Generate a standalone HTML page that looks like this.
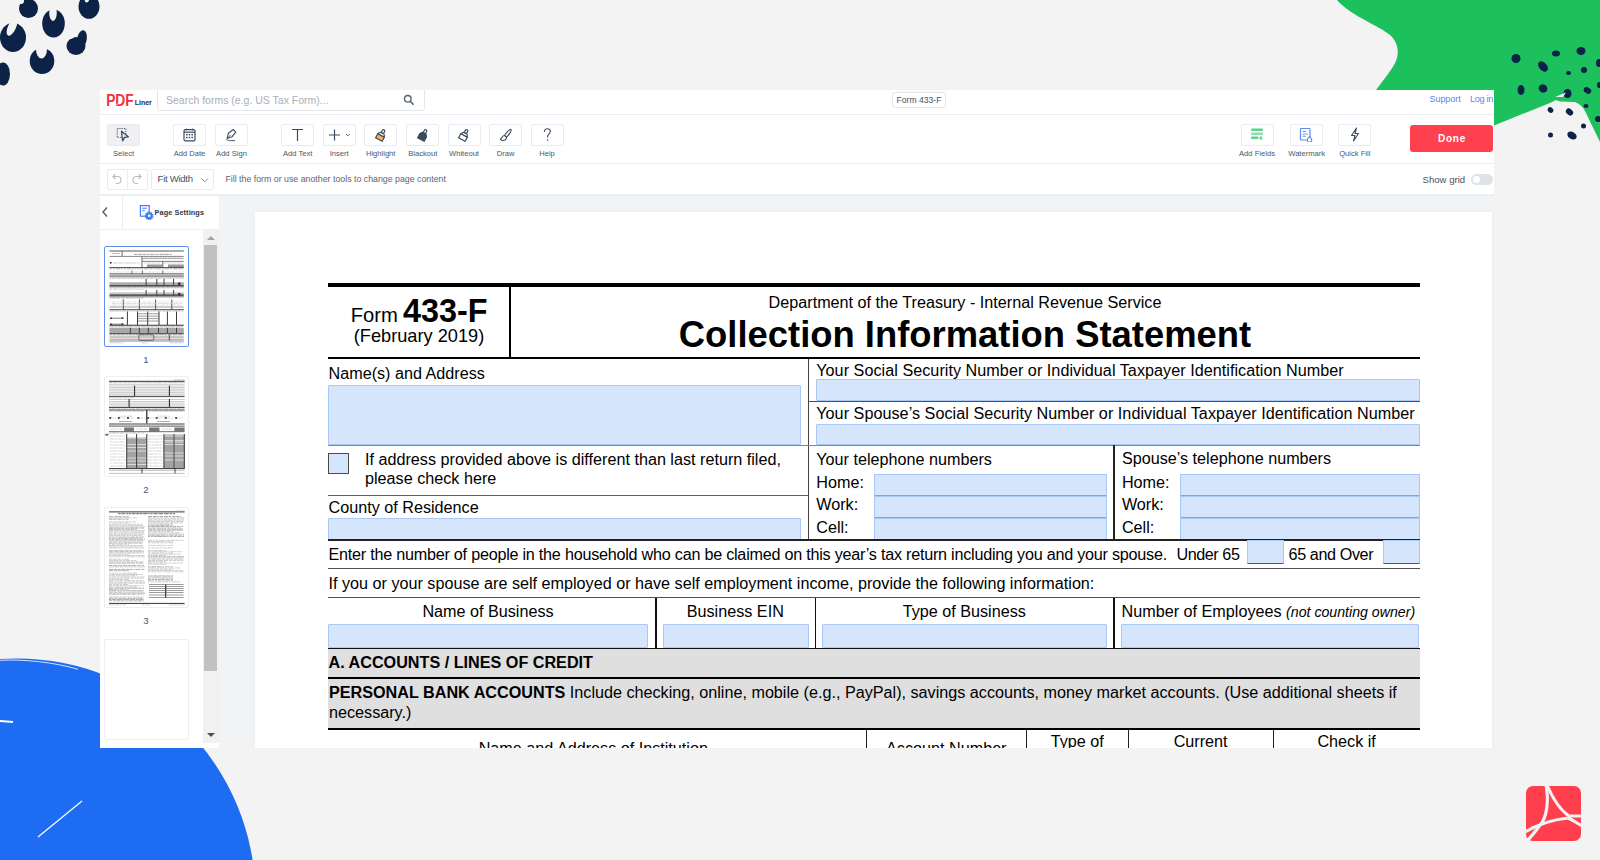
<!DOCTYPE html>
<html><head><meta charset="utf-8"><title>PDFLiner - Form 433-F</title>
<style>
*{box-sizing:border-box}
html,body{margin:0;padding:0}
body{width:1600px;height:860px;position:relative;overflow:hidden;background:#f3f3f3;font-family:"Liberation Sans",sans-serif}
.t{position:absolute;white-space:nowrap;line-height:1}
.r{position:absolute}
.f{position:absolute;background:#d5e6fc;border:1px solid #a9c8f8;border-radius:1px}
.btn{position:absolute;top:33.5px;width:33px;height:22px;border:1px solid #e8ebf1;border-radius:2px;background:#fff}
.lbl{position:absolute;top:60px;font-size:7.6px;color:#4f5666;white-space:nowrap;line-height:1;text-align:center;width:60px}
.thumb{position:absolute;left:3.5px;width:85.5px;height:101px;background:#fff;border:1px solid #eeeff2;border-radius:2px}
.pn{position:absolute;width:92px;left:0;text-align:center;font-size:9.6px;color:#4b5466;line-height:1}
</style></head><body>

<svg style="position:absolute;left:0;top:0" width="1600" height="860" viewBox="0 0 1600 860">
<g fill="#0c2246">
<ellipse cx="28.5" cy="8.5" rx="9.5" ry="9.5"/>
<ellipse cx="53.5" cy="23.5" rx="11.3" ry="14"/>
<ellipse cx="13" cy="37.5" rx="13" ry="14.5"/>
<ellipse cx="89" cy="6.5" rx="10.5" ry="12.3"/>
<ellipse cx="76" cy="46" rx="9.5" ry="9"/><ellipse cx="82" cy="39" rx="4.8" ry="8.8" transform="rotate(10 82 39)"/>
<ellipse cx="42" cy="61" rx="12.3" ry="13"/>
<ellipse cx="3" cy="74" rx="7" ry="11.5"/>
</g>
<g fill="#f3f3f3">
<ellipse cx="21" cy="1" rx="3" ry="3"/>
<ellipse cx="53" cy="12.5" rx="3.8" ry="8.5"/>
<ellipse cx="12" cy="27" rx="4" ry="9.5" transform="rotate(25 12 27)"/>
<ellipse cx="87" cy="0" rx="2" ry="2.5" transform="rotate(30 87 0)"/>
<ellipse cx="71" cy="34" rx="4.5" ry="5" transform="rotate(35 71 34)"/>
<ellipse cx="41.5" cy="49" rx="5.5" ry="9.5"/>
</g>
<path fill="#1cc15e" d="M1337,0 C1341,5 1350,12 1363,19 C1375,26 1384,30 1390,35 C1397,41 1399,50 1397,58 C1395,66 1385,78 1376,90 L1365,120 L1494,140 L1494,125.5 L1551,102.5 L1556,100 L1560,101.5 L1575,102 C1580,104 1583,107 1585,111 L1600,142 L1600,0 Z"/>
<g fill="#0c2246">
<ellipse cx="1516" cy="58.5" rx="4.5" ry="4.5"/>
<ellipse cx="1556" cy="53.5" rx="4" ry="3"/>
<ellipse cx="1581" cy="51" rx="4.5" ry="4"/>
<ellipse cx="1599" cy="63" rx="3" ry="4"/>
<ellipse cx="1543" cy="66.5" rx="6" ry="4" transform="rotate(50 1543 66.5)"/>
<ellipse cx="1584" cy="70" rx="3" ry="3"/>
<ellipse cx="1568.5" cy="73" rx="2.5" ry="2"/>
<ellipse cx="1521" cy="90" rx="3.5" ry="5"/>
<ellipse cx="1543" cy="88.5" rx="4.5" ry="4" transform="rotate(30 1543 88.5)"/>
<ellipse cx="1567.5" cy="93.5" rx="4" ry="4.5"/>
<ellipse cx="1587.5" cy="90.5" rx="4" ry="3" transform="rotate(30 1587.5 90.5)"/>
<ellipse cx="1599" cy="85" rx="2" ry="3"/>
<ellipse cx="1586" cy="106" rx="2.5" ry="2"/>
<ellipse cx="1550.5" cy="110" rx="3" ry="2.5" transform="rotate(40 1550.5 110)"/>
<ellipse cx="1569.5" cy="112" rx="4" ry="3" transform="rotate(40 1569.5 112)"/>
<ellipse cx="1598" cy="119" rx="3" ry="3"/>
<ellipse cx="1583.5" cy="126" rx="2.5" ry="2.5"/>
<ellipse cx="1550.5" cy="135" rx="2.5" ry="2.5"/>
<ellipse cx="1572" cy="135.5" rx="5" ry="3.5" transform="rotate(30 1572 135.5)"/>
</g>
<path d="M1555,97 L1566,92.5 L1563,97 Z" fill="#f3f3f3"/>
<circle cx="17" cy="897" r="238.5" fill="#1e6cf1"/>
<path d="M0,660.3 C25,659 55,662.5 78,669.3" stroke="#fff" stroke-width="0.8" fill="none"/>
<path d="M0,721 L13,722" stroke="#fff" stroke-width="2" fill="none"/>
<path d="M38,837 L82,801" stroke="#fff" stroke-width="1.2" fill="none"/>
<g>
<rect x="1526" y="786" width="55" height="55" rx="7" fill="#ff3f4e"/>
<path d="M1546,785 C1549,800 1547,818 1540,825 C1535,832 1530,838 1526,842" stroke="#f3f3f3" stroke-width="3.2" fill="none"/>
<path d="M1547,785 C1553,799 1560,810 1569,816 L1582,816" stroke="#f3f3f3" stroke-width="3" fill="none"/>
<path d="M1525,832 C1535,826 1550,820 1568,818 C1573,820 1578,824 1582,826" stroke="#f3f3f3" stroke-width="3" fill="none"/>
</g>
</svg>

<div style="position:absolute;left:100px;top:90px;width:1394px;height:658px;background:#fff;overflow:hidden">
<div class="r" style="left:0;top:24px;width:1394px;height:1px;background:#e9ecf1"></div>
<svg style="position:absolute;left:5px;top:3px" width="50" height="16" viewBox="0 0 50 16">
<text x="1.2" y="12.9" font-family="Liberation Sans" font-weight="bold" font-size="15.6" fill="#f2303f" textLength="27.5" lengthAdjust="spacingAndGlyphs">PDF</text><path d="M11.5,12.3 C14,9.8 16,7.3 17,3.8" stroke="#fff" stroke-width="0.9" fill="none"/>
<text x="29.7" y="11.6" font-family="Liberation Sans" font-weight="bold" font-size="7" fill="#1d2a44">Liner</text>
</svg>
<div class="r" style="left:57.4px;top:-1px;width:268px;height:21.5px;border:1px solid #e4e7ee;border-radius:0 0 3px 3px;background:#fff"></div>
<div class="t" style="left:66px;top:5px;font-size:10.5px;color:#a9aeb8">Search forms (e.g. US Tax Form)...</div>
<svg style="position:absolute;left:303px;top:4px" width="12" height="12" viewBox="0 0 12 12"><circle cx="4.8" cy="4.8" r="3.3" stroke="#5a6475" stroke-width="1.4" fill="none"/><path d="M7.3,7.3 L10.2,10.2" stroke="#5a6475" stroke-width="1.6" stroke-linecap="round"/></svg>
<div class="r" style="left:791.5px;top:2.25px;width:54px;height:15.25px;border:1px solid #e4e7ee;border-radius:3px"></div>
<div class="t" style="left:796.5px;top:5.6px;font-size:8.6px;color:#4b5261">Form 433-F</div>
<div class="t" style="left:1329.5px;top:4.7px;font-size:9px;color:#4f88ee;letter-spacing:-0.05px">Support</div>
<div class="t" style="left:1370px;top:4.6px;font-size:9.2px;color:#4f88ee;letter-spacing:-0.35px">Log in</div>
<div class="r" style="left:0;top:73.2px;width:1394px;height:1.2px;background:#eceef2"></div>
<div class="btn" style="left:7px;background:#eef0f3;border-color:#e8eaee;"></div>
<div class="lbl" style="left:-6.5px">Select</div>
<div class="btn" style="left:73px;"></div>
<div class="lbl" style="left:59.5px">Add Date</div>
<div class="btn" style="left:115px;"></div>
<div class="lbl" style="left:101.5px">Add Sign</div>
<div class="btn" style="left:181.2px;"></div>
<div class="lbl" style="left:167.7px">Add Text</div>
<div class="btn" style="left:222.7px;"></div>
<div class="lbl" style="left:209.2px">Insert</div>
<div class="btn" style="left:264.2px;"></div>
<div class="lbl" style="left:250.7px">Highlight</div>
<div class="btn" style="left:306.3px;"></div>
<div class="lbl" style="left:292.8px">Blackout</div>
<div class="btn" style="left:347.5px;"></div>
<div class="lbl" style="left:334.0px">Whiteout</div>
<div class="btn" style="left:389.2px;"></div>
<div class="lbl" style="left:375.7px">Draw</div>
<div class="btn" style="left:430.5px;"></div>
<div class="lbl" style="left:417.0px">Help</div>
<div class="btn" style="left:1140.5px;"></div>
<div class="lbl" style="left:1127.0px">Add Fields</div>
<div class="btn" style="left:1190.2px;"></div>
<div class="lbl" style="left:1176.7px">Watermark</div>
<div class="btn" style="left:1238.3px;"></div>
<div class="lbl" style="left:1224.8px">Quick Fill</div>
<svg style="position:absolute;left:16px;top:37px" width="14" height="15" viewBox="0 0 14 15"><rect x="1.2" y="1.5" width="8.6" height="8.9" fill="none" stroke="#3d4b60" stroke-width="0.9" stroke-dasharray="1.2 1"/><path d="M5.5,4.2 L12.3,9.8 L8.6,10.4 L6.6,13.8 Z" fill="#eef0f3" stroke="#3d4b60" stroke-width="1.3" stroke-linejoin="round"/></svg>
<svg style="position:absolute;left:83px;top:38px" width="13" height="14" viewBox="0 0 13 14"><rect x="1" y="1.6" width="11" height="11.2" rx="1.3" fill="none" stroke="#3d4b60" stroke-width="1.2"/><path d="M1,4.2 H12" stroke="#3d4b60" stroke-width="1.2"/><path d="M3.5,0.6 V2.4 M9.5,0.6 V2.4" stroke="#3d4b60" stroke-width="1"/><g fill="#3d4b60"><rect x="3" y="6" width="1.6" height="1.4"/><rect x="5.7" y="6" width="1.6" height="1.4"/><rect x="8.4" y="6" width="1.6" height="1.4"/><rect x="3" y="8.8" width="1.6" height="1.4"/><rect x="5.7" y="8.8" width="1.6" height="1.4"/><rect x="8.4" y="8.8" width="1.6" height="1.4"/></g></svg>
<svg style="position:absolute;left:125px;top:38px" width="12" height="14" viewBox="0 0 12 14"><path d="M2.2,10.5 L3.2,5.5 L8.2,1.5 L10.8,4.1 L7,8.8 Z" fill="none" stroke="#3d4b60" stroke-width="1.1" stroke-linejoin="round"/><path d="M2.2,10.5 L5.6,6.8" stroke="#3d4b60" stroke-width="0.9"/><path d="M1.5,11.5 C3,12.8 5,12.6 10,12.6" stroke="#3d4b60" stroke-width="1" fill="none"/></svg>
<svg style="position:absolute;left:190px;top:37px" width="16" height="16" viewBox="0 0 16 16"><path d="M2,2.5 H13 M7.5,2.5 V14" stroke="#3d4b60" stroke-width="1.2" fill="none"/></svg>
<svg style="position:absolute;left:228px;top:38px" width="24" height="14" viewBox="0 0 24 14"><path d="M6.5,1.5 V12.5 M1,7 H12" stroke="#3d4b60" stroke-width="1.2"/><path d="M18,6 L19.8,7.8 L21.6,6" stroke="#3d4b60" stroke-width="0.9" fill="none"/></svg>
<svg style="position:absolute;left:274px;top:38px" width="14" height="14" viewBox="0 0 14 14"><g transform="translate(7.3 7) rotate(28) scale(0.92) translate(-7 -7)"><rect x="5.6" y="0.6" width="2.8" height="4.2" rx="1.4" fill="none" stroke="#3d4b60" stroke-width="1.3"/><path d="M4.6,4.8 H9.4 L11,7.6 H3 Z" fill="#fff" stroke="#3d4b60" stroke-width="1.2" stroke-linejoin="round"/><path d="M3,7.6 H11 V12.6 H3 Z" fill="#f3b84d" stroke="#3d4b60" stroke-width="1.3"/></g></svg>
<svg style="position:absolute;left:316px;top:38px" width="14" height="14" viewBox="0 0 14 14"><g transform="translate(7.3 7) rotate(28) scale(0.92) translate(-7 -7)"><rect x="5.6" y="0.6" width="2.8" height="4.2" rx="1.4" fill="none" stroke="#3d4b60" stroke-width="1.3"/><path d="M4.6,4.8 H9.4 L11,7.6 H3 Z" fill="#3d4b60" stroke="#3d4b60" stroke-width="1.2" stroke-linejoin="round"/><path d="M3,7.6 H11 V12.6 H3 Z" fill="#3d4b60" stroke="#3d4b60" stroke-width="1.3"/></g></svg>
<svg style="position:absolute;left:357px;top:38px" width="14" height="14" viewBox="0 0 14 14"><g transform="translate(7.3 7) rotate(28) scale(0.92) translate(-7 -7)"><rect x="5.6" y="0.6" width="2.8" height="4.2" rx="1.4" fill="none" stroke="#3d4b60" stroke-width="1.3"/><path d="M4.6,4.8 H9.4 L11,7.6 H3 Z" fill="#fff" stroke="#3d4b60" stroke-width="1.2" stroke-linejoin="round"/><path d="M3,7.6 H11 V12.6 H3 Z" fill="#fff" stroke="#3d4b60" stroke-width="1.3"/></g></svg>
<svg style="position:absolute;left:399px;top:38px" width="14" height="14" viewBox="0 0 14 14"><path d="M12,1.5 C13,2.5 10,7 7.5,9 L5.5,7.5 C7,5 11,0.5 12,1.5 Z" fill="none" stroke="#3d4b60" stroke-width="1.1"/><path d="M5.5,7.5 C3,7.5 3.5,10 2,10.5 C1,11 1.5,12.5 4,12.5 C6.5,12.5 7.5,10.5 7.5,9" fill="none" stroke="#3d4b60" stroke-width="1.1"/></svg>
<svg style="position:absolute;left:439.5px;top:37px" width="14" height="16" viewBox="0 0 14 16"><path d="M4.3,5 C4.3,2.8 5.8,1.8 7.3,1.8 C8.9,1.8 10.3,2.9 10.3,4.6 C10.3,6.8 7.6,7.2 7.6,9.6 V10.4" stroke="#3d4b60" stroke-width="1.1" fill="none"/><circle cx="7.6" cy="13" r="0.75" fill="#3d4b60"/></svg>
<svg style="position:absolute;left:1150px;top:37px" width="14" height="15" viewBox="0 0 14 15"><g fill="#5fd08b"><rect x="1" y="1.5" width="12" height="2.4" rx="0.8"/><rect x="1" y="5.5" width="12" height="2.4" rx="0.8" fill="#8fdcae"/><rect x="1" y="9.5" width="7.5" height="2.4" rx="0.8"/><path d="M11,9 V13 M9,11 H13" stroke="#5fd08b" stroke-width="1.2"/></g></svg>
<svg style="position:absolute;left:1199px;top:37px" width="14" height="15" viewBox="0 0 14 15"><rect x="1.5" y="1.5" width="9.5" height="11.5" rx="0.8" fill="none" stroke="#5b8ef0" stroke-width="1.2"/><path d="M3.5,4.5 H7 M3.5,7 H9 M3.5,9.2 H7" stroke="#5b8ef0" stroke-width="0.9"/><path d="M10.5,9.5 C12,11 12.8,12 12.8,13 A2.2,2.2 0 0 1 8.3,13 C8.3,12 9,11 10.5,9.5 Z" fill="#fff" stroke="#5b8ef0" stroke-width="1.1"/></svg>
<svg style="position:absolute;left:1248px;top:37px" width="14" height="15" viewBox="0 0 14 15"><path d="M8.5,1 L3.5,8.5 H7 L5.5,14 L10.5,6.5 H7 Z" fill="none" stroke="#3d4b60" stroke-width="1.1" stroke-linejoin="round"/></svg>
<div class="r" style="left:1309.8px;top:35px;width:83px;height:27px;background:#fe404f;border-radius:3px"></div>
<div class="t" style="left:1310.5px;width:83px;text-align:center;top:44px;font-size:10px;font-weight:bold;color:#fff;letter-spacing:0.75px">Done</div>
<div class="r" style="left:0;top:104px;width:1394px;height:1.5px;background:#eceef2"></div>
<div class="r" style="left:7px;top:79.3px;width:20.5px;height:20.4px;border:1px solid #e8ebf0;border-radius:2px 0 0 2px"></div>
<div class="r" style="left:27px;top:79.3px;width:20.5px;height:20.4px;border:1px solid #e8ebf0;border-radius:0 2px 2px 0"></div>
<svg style="position:absolute;left:12px;top:83px" width="12" height="12" viewBox="0 0 12 12"><path d="M3.5,0.8 L0.9,3.5 L3.5,6.2" stroke="#b9bec6" stroke-width="1.1" fill="none"/><path d="M1,3.5 H5.5 A3.5,3.5 0 0 1 5.5,10.5 H4" stroke="#b9bec6" stroke-width="1.1" fill="none"/></svg>
<svg style="position:absolute;left:30px;top:83px" width="12" height="12" viewBox="0 0 12 12"><g transform="translate(12,0) scale(-1,1)"><path d="M3.5,0.8 L0.9,3.5 L3.5,6.2" stroke="#b9bec6" stroke-width="1.1" fill="none"/><path d="M1,3.5 H5.5 A3.5,3.5 0 0 1 5.5,10.5 H4" stroke="#b9bec6" stroke-width="1.1" fill="none"/></g></svg>
<div class="r" style="left:51.3px;top:79.3px;width:63px;height:20.4px;border:1px solid #e8ebf0;border-radius:2px"></div>
<div class="t" style="left:57.6px;top:84px;font-size:9.6px;color:#4b5261;letter-spacing:-0.3px">Fit Width</div>
<svg style="position:absolute;left:100px;top:86px" width="10" height="8" viewBox="0 0 10 8"><path d="M1.5,2.5 L4.8,5.8 L8.1,2.5" stroke="#8a909b" stroke-width="1" fill="none"/></svg>
<div class="t" style="left:125.4px;top:84.5px;font-size:8.8px;color:#5d6472">Fill the form or use another tools to change page content</div>
<div class="t" style="left:1322.5px;top:85px;font-size:9.6px;color:#4b5261">Show grid</div>
<div class="r" style="left:1371px;top:84px;width:22px;height:11px;background:#dfe3e9;border-radius:6px"></div>
<div class="r" style="left:1373px;top:86px;width:7px;height:7px;background:#fff;border-radius:50%"></div>
<div class="r" style="left:119px;top:105.5px;width:1275px;height:553px;background:#f2f3f5"></div>
<div class="r" style="left:155px;top:122px;width:1237px;height:540px;background:#fff;box-shadow:0 0 2px rgba(0,0,0,0.06)"></div>
<div class="r" style="left:0;top:105.5px;width:119px;height:553px;background:#fff"></div>
<div class="r" style="left:0;top:138.5px;width:119px;height:1px;background:#eef0f3"></div>
<div class="r" style="left:22.3px;top:105.5px;width:1px;height:33px;background:#e9ecf1"></div>
<svg style="position:absolute;left:1.4px;top:116px" width="8" height="12" viewBox="0 0 8 12"><path d="M6,1.5 L2,6 L6,10.5" stroke="#4b5568" stroke-width="1.3" fill="none"/></svg>
<svg style="position:absolute;left:39px;top:114px" width="15" height="16" viewBox="0 0 15 16"><rect x="1.4" y="1.6" width="8.8" height="10.6" fill="none" stroke="#3f7df0" stroke-width="1.2"/><path d="M3.2,4.2 H7.8 M3.2,6.6 H5.8" stroke="#3f7df0" stroke-width="1"/><circle cx="10.2" cy="11.8" r="3.6" fill="#3f7df0"/><circle cx="10.2" cy="11.8" r="3.9" fill="none" stroke="#3f7df0" stroke-width="1.2" stroke-dasharray="1.1 0.9"/><circle cx="10.2" cy="11.8" r="1.3" fill="#fff"/></svg>
<div class="t" style="left:54.5px;top:118.6px;font-size:7.3px;font-weight:bold;color:#2f3848;letter-spacing:0.1px">Page Settings</div>
<div class="r" style="left:103px;top:139.5px;width:15.5px;height:513px;background:#f1f1f1"></div>
<div class="r" style="left:104.2px;top:155px;width:13px;height:425.6px;background:#c1c1c1"></div>
<svg style="position:absolute;left:106px;top:145px" width="10" height="6" viewBox="0 0 10 6"><path d="M1,5 L5,1 L9,5 Z" fill="#a3a3a3"/></svg>
<svg style="position:absolute;left:106px;top:642px" width="10" height="6" viewBox="0 0 10 6"><path d="M1,1 L5,5 L9,1 Z" fill="#505050"/></svg>
<div class="thumb" style="top:156px;border:1px solid #5e90f0;"><svg style="position:absolute;left:-1px;top:-1px" width="85.5" height="101" viewBox="0 0 85.5 101"><path d="M5.5,5.0 H79.8" stroke="#444" stroke-width="0.9"/><path d="M18.1,5.0 V10.4" stroke="#444" stroke-width="0.8"/><path d="M30.0,8.4 H33.1" stroke="#999" stroke-width="0.9"/><path d="M33.8,8.4 H38.6" stroke="#999" stroke-width="0.9"/><path d="M39.2,8.4 H42.5" stroke="#999" stroke-width="0.9"/><path d="M43.3,8.4 H45.4" stroke="#999" stroke-width="0.9"/><path d="M46.1,8.4 H49.8" stroke="#999" stroke-width="0.9"/><path d="M50.7,8.4 H52.5" stroke="#999" stroke-width="0.9"/><path d="M53.1,8.4 H54.9" stroke="#999" stroke-width="0.9"/><path d="M55.8,8.4 H59.7" stroke="#999" stroke-width="0.9"/><path d="M60.2,8.4 H65.1" stroke="#999" stroke-width="0.9"/><path d="M66.1,8.4 H67.8" stroke="#999" stroke-width="0.9"/><path d="M8.0,7.5 H10.1" stroke="#888" stroke-width="0.6"/><path d="M10.5,7.5 H13.8" stroke="#888" stroke-width="0.6"/><path d="M14.2,7.5 H16.0" stroke="#888" stroke-width="0.6"/><path d="M5.5,10.4 H79.8" stroke="#555" stroke-width="0.7"/><path d="M38.0,10.4 V21.5" stroke="#444" stroke-width="0.8"/><path d="M38.0,12.6 H79.8" stroke="#777" stroke-width="0.6"/><path d="M40.0,11.6 H41.6" stroke="#bbb" stroke-width="0.6"/><path d="M42.3,11.6 H45.3" stroke="#bbb" stroke-width="0.6"/><path d="M46.2,11.6 H49.5" stroke="#bbb" stroke-width="0.6"/><path d="M50.3,11.6 H53.6" stroke="#bbb" stroke-width="0.6"/><path d="M54.4,11.6 H57.5" stroke="#bbb" stroke-width="0.6"/><path d="M58.0,11.6 H63.0" stroke="#bbb" stroke-width="0.6"/><path d="M64.0,11.6 H68.5" stroke="#bbb" stroke-width="0.6"/><path d="M69.3,11.6 H71.9" stroke="#bbb" stroke-width="0.6"/><path d="M72.4,11.6 H75.0" stroke="#bbb" stroke-width="0.6"/><path d="M75.4,11.6 H78.0" stroke="#bbb" stroke-width="0.6"/><path d="M38.0,15.4 H79.8" stroke="#555" stroke-width="0.7"/><rect x="6.0" y="16.0" width="1.6" height="1.6" fill="#333"/><path d="M9.0,17.0 H13.5" stroke="#aaa" stroke-width="0.6"/><path d="M14.1,17.0 H18.9" stroke="#aaa" stroke-width="0.6"/><path d="M19.9,17.0 H21.4" stroke="#aaa" stroke-width="0.6"/><path d="M21.9,17.0 H26.6" stroke="#aaa" stroke-width="0.6"/><path d="M27.3,17.0 H32.2" stroke="#aaa" stroke-width="0.6"/><path d="M32.8,17.0 H34.6" stroke="#aaa" stroke-width="0.6"/><path d="M35.4,17.0 H36.0" stroke="#aaa" stroke-width="0.6"/><path d="M58.8,15.4 V21.5" stroke="#444" stroke-width="0.8"/><rect x="43.0" y="18.5" width="15.0" height="3.0" fill="#999"/><rect x="64.0" y="18.5" width="15.8" height="3.0" fill="#999"/><path d="M40.0,17.0 H41.8" stroke="#bbb" stroke-width="0.6"/><path d="M42.4,17.0 H47.3" stroke="#bbb" stroke-width="0.6"/><path d="M48.1,17.0 H50.0" stroke="#bbb" stroke-width="0.6"/><path d="M50.6,17.0 H52.4" stroke="#bbb" stroke-width="0.6"/><path d="M52.9,17.0 H56.0" stroke="#bbb" stroke-width="0.6"/><path d="M60.0,17.0 H63.5" stroke="#bbb" stroke-width="0.6"/><path d="M64.1,17.0 H66.3" stroke="#bbb" stroke-width="0.6"/><path d="M67.1,17.0 H69.1" stroke="#bbb" stroke-width="0.6"/><path d="M69.9,17.0 H71.8" stroke="#bbb" stroke-width="0.6"/><path d="M72.4,17.0 H74.7" stroke="#bbb" stroke-width="0.6"/><path d="M75.2,17.0 H78.0" stroke="#bbb" stroke-width="0.6"/><path d="M5.5,21.5 H79.8" stroke="#444" stroke-width="0.9"/><path d="M5.5,22.8 H8.1" stroke="#888" stroke-width="0.7"/><path d="M9.0,22.8 H11.2" stroke="#888" stroke-width="0.7"/><path d="M11.9,22.8 H16.4" stroke="#888" stroke-width="0.7"/><path d="M17.1,22.8 H19.0" stroke="#888" stroke-width="0.7"/><path d="M20.0,22.8 H22.2" stroke="#888" stroke-width="0.7"/><path d="M22.8,22.8 H27.0" stroke="#888" stroke-width="0.7"/><path d="M27.6,22.8 H30.1" stroke="#888" stroke-width="0.7"/><path d="M30.6,22.8 H32.4" stroke="#888" stroke-width="0.7"/><path d="M33.1,22.8 H35.5" stroke="#888" stroke-width="0.7"/><path d="M36.3,22.8 H39.1" stroke="#888" stroke-width="0.7"/><path d="M39.7,22.8 H44.6" stroke="#888" stroke-width="0.7"/><path d="M45.3,22.8 H48.8" stroke="#888" stroke-width="0.7"/><path d="M49.7,22.8 H51.8" stroke="#888" stroke-width="0.7"/><path d="M52.3,22.8 H57.0" stroke="#888" stroke-width="0.7"/><path d="M57.9,22.8 H60.3" stroke="#888" stroke-width="0.7"/><path d="M60.8,22.8 H64.9" stroke="#888" stroke-width="0.7"/><path d="M65.8,22.8 H68.0" stroke="#888" stroke-width="0.7"/><path d="M69.0,22.8 H73.6" stroke="#888" stroke-width="0.7"/><path d="M74.4,22.8 H77.3" stroke="#888" stroke-width="0.7"/><path d="M77.8,22.8 H79.4" stroke="#888" stroke-width="0.7"/><path d="M27.9,24.5 V27.8" stroke="#333" stroke-width="0.8"/><path d="M38.4,24.5 V27.8" stroke="#333" stroke-width="0.8"/><path d="M58.8,24.5 V27.8" stroke="#333" stroke-width="0.8"/><path d="M5.5,26.0 H7.8" stroke="#ccc" stroke-width="0.6"/><path d="M8.7,26.0 H11.1" stroke="#ccc" stroke-width="0.6"/><path d="M12.0,26.0 H15.5" stroke="#ccc" stroke-width="0.6"/><path d="M16.1,26.0 H18.2" stroke="#ccc" stroke-width="0.6"/><path d="M19.1,26.0 H20.8" stroke="#ccc" stroke-width="0.6"/><path d="M21.3,26.0 H24.8" stroke="#ccc" stroke-width="0.6"/><path d="M25.7,26.0 H29.4" stroke="#ccc" stroke-width="0.6"/><path d="M29.9,26.0 H34.6" stroke="#ccc" stroke-width="0.6"/><path d="M35.2,26.0 H36.7" stroke="#ccc" stroke-width="0.6"/><path d="M37.3,26.0 H40.3" stroke="#ccc" stroke-width="0.6"/><path d="M40.8,26.0 H42.9" stroke="#ccc" stroke-width="0.6"/><path d="M43.5,26.0 H47.0" stroke="#ccc" stroke-width="0.6"/><path d="M47.5,26.0 H50.3" stroke="#ccc" stroke-width="0.6"/><path d="M51.2,26.0 H56.1" stroke="#ccc" stroke-width="0.6"/><path d="M56.9,26.0 H60.8" stroke="#ccc" stroke-width="0.6"/><path d="M61.6,26.0 H63.6" stroke="#ccc" stroke-width="0.6"/><path d="M64.0,26.0 H65.6" stroke="#ccc" stroke-width="0.6"/><path d="M66.5,26.0 H70.5" stroke="#ccc" stroke-width="0.6"/><path d="M71.4,26.0 H73.0" stroke="#ccc" stroke-width="0.6"/><path d="M73.8,26.0 H77.0" stroke="#ccc" stroke-width="0.6"/><path d="M77.8,26.0 H79.8" stroke="#ccc" stroke-width="0.6"/><path d="M5.5,27.8 H79.8" stroke="#444" stroke-width="0.8"/><rect x="5.5" y="28.3" width="74.3" height="2.6" fill="#aaa"/><path d="M5.5,31.0 H79.8" stroke="#666" stroke-width="0.6"/><path d="M5.5,32.5 H7.3" stroke="#bbb" stroke-width="0.6"/><path d="M8.0,32.5 H12.1" stroke="#bbb" stroke-width="0.6"/><path d="M13.0,32.5 H17.1" stroke="#bbb" stroke-width="0.6"/><path d="M17.9,32.5 H22.2" stroke="#bbb" stroke-width="0.6"/><path d="M23.1,32.5 H25.9" stroke="#bbb" stroke-width="0.6"/><path d="M26.7,32.5 H31.3" stroke="#bbb" stroke-width="0.6"/><path d="M32.3,32.5 H35.2" stroke="#bbb" stroke-width="0.6"/><path d="M36.1,32.5 H40.6" stroke="#bbb" stroke-width="0.6"/><path d="M41.4,32.5 H45.0" stroke="#bbb" stroke-width="0.6"/><path d="M45.7,32.5 H49.2" stroke="#bbb" stroke-width="0.6"/><path d="M50.0,32.5 H51.8" stroke="#bbb" stroke-width="0.6"/><path d="M52.5,32.5 H57.5" stroke="#bbb" stroke-width="0.6"/><path d="M58.4,32.5 H62.5" stroke="#bbb" stroke-width="0.6"/><path d="M63.1,32.5 H67.2" stroke="#bbb" stroke-width="0.6"/><path d="M67.9,32.5 H71.0" stroke="#bbb" stroke-width="0.6"/><path d="M71.9,32.5 H73.7" stroke="#bbb" stroke-width="0.6"/><path d="M74.5,32.5 H76.1" stroke="#bbb" stroke-width="0.6"/><path d="M76.9,32.5 H79.8" stroke="#bbb" stroke-width="0.6"/><path d="M42.1,33.0 V39.5" stroke="#222" stroke-width="0.9"/><path d="M52.8,33.0 V39.5" stroke="#222" stroke-width="0.9"/><path d="M60.0,33.0 V39.5" stroke="#222" stroke-width="0.9"/><path d="M69.6,33.0 V39.5" stroke="#222" stroke-width="0.9"/><path d="M5.5,36.8 H79.8" stroke="#777" stroke-width="0.6"/><path d="M5.5,38.0 H79.8" stroke="#444" stroke-width="0.8"/><path d="M5.5,39.5 H79.8" stroke="#333" stroke-width="0.9"/><rect x="74.0" y="36.5" width="2.5" height="2.5" fill="#333"/><rect x="5.5" y="40.0" width="74.3" height="1.2" fill="#888"/><path d="M5.5,41.8 H9.4" stroke="#999" stroke-width="0.7"/><path d="M10.1,41.8 H13.8" stroke="#999" stroke-width="0.7"/><path d="M14.7,41.8 H17.1" stroke="#999" stroke-width="0.7"/><path d="M17.5,41.8 H20.1" stroke="#999" stroke-width="0.7"/><path d="M20.9,41.8 H23.1" stroke="#999" stroke-width="0.7"/><path d="M23.6,41.8 H28.3" stroke="#999" stroke-width="0.7"/><path d="M29.1,41.8 H32.1" stroke="#999" stroke-width="0.7"/><path d="M33.1,41.8 H35.7" stroke="#999" stroke-width="0.7"/><path d="M36.5,41.8 H38.7" stroke="#999" stroke-width="0.7"/><path d="M39.4,41.8 H43.7" stroke="#999" stroke-width="0.7"/><path d="M44.6,41.8 H49.2" stroke="#999" stroke-width="0.7"/><path d="M49.8,41.8 H53.4" stroke="#999" stroke-width="0.7"/><path d="M54.0,41.8 H56.0" stroke="#999" stroke-width="0.7"/><path d="M56.7,41.8 H61.1" stroke="#999" stroke-width="0.7"/><path d="M62.0,41.8 H66.0" stroke="#999" stroke-width="0.7"/><path d="M66.9,41.8 H69.4" stroke="#999" stroke-width="0.7"/><path d="M69.9,41.8 H73.0" stroke="#999" stroke-width="0.7"/><path d="M73.6,41.8 H75.8" stroke="#999" stroke-width="0.7"/><path d="M76.5,41.8 H79.8" stroke="#999" stroke-width="0.7"/><path d="M5.5,43.3 H8.1" stroke="#bbb" stroke-width="0.6"/><path d="M9.0,43.3 H13.9" stroke="#bbb" stroke-width="0.6"/><path d="M14.6,43.3 H16.4" stroke="#bbb" stroke-width="0.6"/><path d="M16.8,43.3 H21.4" stroke="#bbb" stroke-width="0.6"/><path d="M21.8,43.3 H25.8" stroke="#bbb" stroke-width="0.6"/><path d="M26.5,43.3 H29.1" stroke="#bbb" stroke-width="0.6"/><path d="M30.0,43.3 H31.5" stroke="#bbb" stroke-width="0.6"/><path d="M32.0,43.3 H35.1" stroke="#bbb" stroke-width="0.6"/><path d="M35.5,43.3 H39.9" stroke="#bbb" stroke-width="0.6"/><path d="M42.1,44.0 V49.6" stroke="#222" stroke-width="0.9"/><path d="M52.8,44.0 V49.6" stroke="#222" stroke-width="0.9"/><path d="M60.0,44.0 V49.6" stroke="#222" stroke-width="0.9"/><path d="M69.6,44.0 V49.6" stroke="#222" stroke-width="0.9"/><path d="M5.5,47.0 H79.8" stroke="#777" stroke-width="0.6"/><path d="M5.5,48.4 H79.8" stroke="#444" stroke-width="0.8"/><path d="M5.5,49.6 H79.8" stroke="#333" stroke-width="0.9"/><rect x="74.0" y="47.0" width="2.5" height="2.5" fill="#333"/><rect x="5.5" y="50.2" width="74.3" height="1.2" fill="#888"/><path d="M5.5,52.0 H7.5" stroke="#999" stroke-width="0.7"/><path d="M7.9,52.0 H11.6" stroke="#999" stroke-width="0.7"/><path d="M12.3,52.0 H16.0" stroke="#999" stroke-width="0.7"/><path d="M16.8,52.0 H21.1" stroke="#999" stroke-width="0.7"/><path d="M22.1,52.0 H26.0" stroke="#999" stroke-width="0.7"/><path d="M26.5,52.0 H29.7" stroke="#999" stroke-width="0.7"/><path d="M30.2,52.0 H31.7" stroke="#999" stroke-width="0.7"/><path d="M32.4,52.0 H36.4" stroke="#999" stroke-width="0.7"/><path d="M36.9,52.0 H39.4" stroke="#999" stroke-width="0.7"/><path d="M40.0,52.0 H40.0" stroke="#999" stroke-width="0.7"/><path d="M19.3,53.5 V63.7" stroke="#333" stroke-width="0.9"/><path d="M35.4,53.5 V63.7" stroke="#333" stroke-width="0.9"/><path d="M51.6,53.5 V63.7" stroke="#333" stroke-width="0.9"/><path d="M67.8,53.5 V63.7" stroke="#333" stroke-width="0.9"/><path d="M8.0,56.0 H11.7" stroke="#ccc" stroke-width="0.6"/><path d="M12.5,56.0 H15.4" stroke="#ccc" stroke-width="0.6"/><path d="M16.3,56.0 H20.9" stroke="#ccc" stroke-width="0.6"/><path d="M21.4,56.0 H26.1" stroke="#ccc" stroke-width="0.6"/><path d="M27.0,56.0 H28.9" stroke="#ccc" stroke-width="0.6"/><path d="M29.6,56.0 H33.3" stroke="#ccc" stroke-width="0.6"/><path d="M34.2,56.0 H37.1" stroke="#ccc" stroke-width="0.6"/><path d="M37.8,56.0 H42.4" stroke="#ccc" stroke-width="0.6"/><path d="M43.3,56.0 H48.1" stroke="#ccc" stroke-width="0.6"/><path d="M48.7,56.0 H52.5" stroke="#ccc" stroke-width="0.6"/><path d="M53.0,56.0 H57.1" stroke="#ccc" stroke-width="0.6"/><path d="M58.0,56.0 H61.7" stroke="#ccc" stroke-width="0.6"/><path d="M62.5,56.0 H64.8" stroke="#ccc" stroke-width="0.6"/><path d="M65.7,56.0 H70.7" stroke="#ccc" stroke-width="0.6"/><path d="M71.6,56.0 H75.0" stroke="#ccc" stroke-width="0.6"/><path d="M75.9,56.0 H78.0" stroke="#ccc" stroke-width="0.6"/><path d="M8.0,57.5 H12.5" stroke="#ccc" stroke-width="0.6"/><path d="M13.1,57.5 H14.9" stroke="#ccc" stroke-width="0.6"/><path d="M15.6,57.5 H19.0" stroke="#ccc" stroke-width="0.6"/><path d="M19.8,57.5 H23.1" stroke="#ccc" stroke-width="0.6"/><path d="M23.5,57.5 H27.8" stroke="#ccc" stroke-width="0.6"/><path d="M28.2,57.5 H32.5" stroke="#ccc" stroke-width="0.6"/><path d="M33.0,57.5 H35.7" stroke="#ccc" stroke-width="0.6"/><path d="M36.6,57.5 H38.6" stroke="#ccc" stroke-width="0.6"/><path d="M39.1,57.5 H42.4" stroke="#ccc" stroke-width="0.6"/><path d="M43.2,57.5 H47.7" stroke="#ccc" stroke-width="0.6"/><path d="M48.5,57.5 H53.3" stroke="#ccc" stroke-width="0.6"/><path d="M54.0,57.5 H58.8" stroke="#ccc" stroke-width="0.6"/><path d="M59.2,57.5 H61.5" stroke="#ccc" stroke-width="0.6"/><path d="M62.2,57.5 H64.7" stroke="#ccc" stroke-width="0.6"/><path d="M65.6,57.5 H69.3" stroke="#ccc" stroke-width="0.6"/><path d="M70.0,57.5 H74.5" stroke="#ccc" stroke-width="0.6"/><path d="M75.2,57.5 H77.8" stroke="#ccc" stroke-width="0.6"/><path d="M8.0,59.0 H12.5" stroke="#ccc" stroke-width="0.6"/><path d="M13.4,59.0 H15.6" stroke="#ccc" stroke-width="0.6"/><path d="M16.5,59.0 H21.4" stroke="#ccc" stroke-width="0.6"/><path d="M22.1,59.0 H25.6" stroke="#ccc" stroke-width="0.6"/><path d="M26.2,59.0 H29.5" stroke="#ccc" stroke-width="0.6"/><path d="M30.2,59.0 H33.9" stroke="#ccc" stroke-width="0.6"/><path d="M34.3,59.0 H39.2" stroke="#ccc" stroke-width="0.6"/><path d="M39.9,59.0 H42.8" stroke="#ccc" stroke-width="0.6"/><path d="M43.7,59.0 H47.1" stroke="#ccc" stroke-width="0.6"/><path d="M47.8,59.0 H51.7" stroke="#ccc" stroke-width="0.6"/><path d="M52.2,59.0 H55.6" stroke="#ccc" stroke-width="0.6"/><path d="M56.2,59.0 H61.1" stroke="#ccc" stroke-width="0.6"/><path d="M62.0,59.0 H64.5" stroke="#ccc" stroke-width="0.6"/><path d="M65.2,59.0 H67.1" stroke="#ccc" stroke-width="0.6"/><path d="M67.8,59.0 H72.1" stroke="#ccc" stroke-width="0.6"/><path d="M73.1,59.0 H76.2" stroke="#ccc" stroke-width="0.6"/><path d="M76.8,59.0 H78.0" stroke="#ccc" stroke-width="0.6"/><path d="M5.5,61.0 H79.8" stroke="#777" stroke-width="0.7"/><path d="M5.5,63.7 H79.8" stroke="#333" stroke-width="0.9"/><path d="M5.5,65.0 H10.2" stroke="#aaa" stroke-width="0.7"/><path d="M10.7,65.0 H14.9" stroke="#aaa" stroke-width="0.7"/><path d="M15.4,65.0 H17.5" stroke="#aaa" stroke-width="0.7"/><path d="M18.1,65.0 H22.0" stroke="#aaa" stroke-width="0.7"/><path d="M22.6,65.0 H25.3" stroke="#aaa" stroke-width="0.7"/><path d="M26.1,65.0 H28.0" stroke="#aaa" stroke-width="0.7"/><path d="M28.8,65.0 H30.7" stroke="#aaa" stroke-width="0.7"/><path d="M31.4,65.0 H33.8" stroke="#aaa" stroke-width="0.7"/><path d="M34.3,65.0 H37.7" stroke="#aaa" stroke-width="0.7"/><path d="M38.3,65.0 H41.2" stroke="#aaa" stroke-width="0.7"/><path d="M41.8,65.0 H45.2" stroke="#aaa" stroke-width="0.7"/><path d="M45.7,65.0 H47.9" stroke="#aaa" stroke-width="0.7"/><path d="M48.6,65.0 H52.4" stroke="#aaa" stroke-width="0.7"/><path d="M53.1,65.0 H57.6" stroke="#aaa" stroke-width="0.7"/><path d="M58.3,65.0 H62.8" stroke="#aaa" stroke-width="0.7"/><path d="M63.4,65.0 H67.5" stroke="#aaa" stroke-width="0.7"/><path d="M68.4,65.0 H73.0" stroke="#aaa" stroke-width="0.7"/><path d="M73.6,65.0 H76.2" stroke="#aaa" stroke-width="0.7"/><path d="M77.2,65.0 H79.4" stroke="#aaa" stroke-width="0.7"/><path d="M23.4,65.5 V79.0" stroke="#222" stroke-width="0.9"/><path d="M33.5,65.5 V79.0" stroke="#222" stroke-width="0.9"/><path d="M43.7,65.5 V79.0" stroke="#222" stroke-width="0.9"/><path d="M55.0,65.5 V79.0" stroke="#222" stroke-width="0.9"/><path d="M63.4,65.5 V79.0" stroke="#222" stroke-width="0.9"/><path d="M72.5,65.5 V79.0" stroke="#222" stroke-width="0.9"/><path d="M33.5,67.8 H55.0" stroke="#555" stroke-width="0.6"/><path d="M33.5,70.2 H55.0" stroke="#555" stroke-width="0.6"/><path d="M33.5,72.6 H55.0" stroke="#555" stroke-width="0.6"/><path d="M33.5,75.0 H55.0" stroke="#555" stroke-width="0.6"/><rect x="6.0" y="71.5" width="2.0" height="1.5" fill="#333"/><path d="M8.0,72.2 H18.0" stroke="#444" stroke-width="0.7"/><rect x="17.5" y="71.3" width="2.0" height="1.6" fill="#333"/><rect x="6.0" y="77.5" width="2.0" height="1.5" fill="#333"/><path d="M8.0,78.2 H18.0" stroke="#444" stroke-width="0.7"/><rect x="17.5" y="77.3" width="2.0" height="1.6" fill="#333"/><path d="M5.5,79.3 H79.8" stroke="#333" stroke-width="1.1"/><path d="M5.5,80.8 H10.1" stroke="#999" stroke-width="0.7"/><path d="M10.6,80.8 H12.9" stroke="#999" stroke-width="0.7"/><path d="M13.8,80.8 H16.2" stroke="#999" stroke-width="0.7"/><path d="M16.6,80.8 H21.0" stroke="#999" stroke-width="0.7"/><path d="M21.7,80.8 H26.0" stroke="#999" stroke-width="0.7"/><path d="M26.4,80.8 H29.3" stroke="#999" stroke-width="0.7"/><path d="M30.2,80.8 H31.7" stroke="#999" stroke-width="0.7"/><path d="M32.2,80.8 H36.1" stroke="#999" stroke-width="0.7"/><path d="M37.1,80.8 H42.0" stroke="#999" stroke-width="0.7"/><path d="M42.4,80.8 H45.7" stroke="#999" stroke-width="0.7"/><path d="M46.6,80.8 H49.8" stroke="#999" stroke-width="0.7"/><path d="M50.6,80.8 H52.8" stroke="#999" stroke-width="0.7"/><path d="M53.2,80.8 H55.1" stroke="#999" stroke-width="0.7"/><path d="M55.5,80.8 H59.0" stroke="#999" stroke-width="0.7"/><path d="M59.7,80.8 H63.2" stroke="#999" stroke-width="0.7"/><path d="M63.6,80.8 H65.8" stroke="#999" stroke-width="0.7"/><path d="M66.3,80.8 H70.8" stroke="#999" stroke-width="0.7"/><path d="M71.7,80.8 H76.5" stroke="#999" stroke-width="0.7"/><path d="M76.9,80.8 H78.7" stroke="#999" stroke-width="0.7"/><path d="M79.6,80.8 H79.8" stroke="#999" stroke-width="0.7"/><rect x="5.5" y="81.8" width="74.3" height="5.2" fill="#a8a8a8"/><path d="M26.4,81.8 V87.0" stroke="#333" stroke-width="0.9"/><path d="M35.4,81.8 V87.0" stroke="#333" stroke-width="0.9"/><path d="M44.3,81.8 V87.0" stroke="#333" stroke-width="0.9"/><path d="M54.5,81.8 V87.0" stroke="#333" stroke-width="0.9"/><path d="M63.4,81.8 V87.0" stroke="#333" stroke-width="0.9"/><path d="M72.5,81.8 V87.0" stroke="#333" stroke-width="0.9"/><path d="M5.5,87.6 H79.8" stroke="#333" stroke-width="0.9"/><path d="M5.5,88.6 H8.1" stroke="#888" stroke-width="0.7"/><path d="M8.8,88.6 H12.1" stroke="#888" stroke-width="0.7"/><path d="M12.8,88.6 H16.4" stroke="#888" stroke-width="0.7"/><path d="M16.8,88.6 H20.8" stroke="#888" stroke-width="0.7"/><path d="M21.7,88.6 H23.8" stroke="#888" stroke-width="0.7"/><path d="M24.5,88.6 H28.6" stroke="#888" stroke-width="0.7"/><path d="M29.2,88.6 H31.4" stroke="#888" stroke-width="0.7"/><path d="M31.9,88.6 H35.2" stroke="#888" stroke-width="0.7"/><path d="M35.6,88.6 H40.2" stroke="#888" stroke-width="0.7"/><path d="M41.1,88.6 H45.1" stroke="#888" stroke-width="0.7"/><path d="M46.0,88.6 H49.7" stroke="#888" stroke-width="0.7"/><path d="M50.3,88.6 H53.9" stroke="#888" stroke-width="0.7"/><path d="M54.6,88.6 H59.6" stroke="#888" stroke-width="0.7"/><path d="M60.4,88.6 H62.8" stroke="#888" stroke-width="0.7"/><path d="M63.8,88.6 H67.9" stroke="#888" stroke-width="0.7"/><path d="M68.8,88.6 H73.1" stroke="#888" stroke-width="0.7"/><path d="M73.8,88.6 H78.4" stroke="#888" stroke-width="0.7"/><path d="M79.3,88.6 H79.8" stroke="#888" stroke-width="0.7"/><path d="M5.5,90.2 H79.8" stroke="#777" stroke-width="0.6"/><path d="M5.5,91.8 H79.8" stroke="#777" stroke-width="0.6"/><path d="M5.5,93.4 H79.8" stroke="#777" stroke-width="0.6"/><rect x="34.8" y="88.8" width="15" height="5.6" fill="none" stroke="#444" stroke-width="0.7" rx="1"/><path d="M65.3,88.5 V94.5" stroke="#333" stroke-width="0.8"/><path d="M5.5,95.0 H79.8" stroke="#555" stroke-width="0.7"/><path d="M5.5,96.8 H9.7" stroke="#aaa" stroke-width="0.6"/><path d="M10.3,96.8 H14.4" stroke="#aaa" stroke-width="0.6"/><path d="M14.8,96.8 H17.5" stroke="#aaa" stroke-width="0.6"/><path d="M18.2,96.8 H19.7" stroke="#aaa" stroke-width="0.6"/><path d="M38.0,96.8 H41.7" stroke="#aaa" stroke-width="0.6"/><path d="M42.5,96.8 H44.0" stroke="#aaa" stroke-width="0.6"/><path d="M66.0,96.8 H69.8" stroke="#aaa" stroke-width="0.6"/><path d="M70.4,96.8 H74.2" stroke="#aaa" stroke-width="0.6"/><path d="M75.0,96.8 H78.4" stroke="#aaa" stroke-width="0.6"/><path d="M79.0,96.8 H79.8" stroke="#aaa" stroke-width="0.6"/></svg></div>
<div class="pn" style="top:264.5px">1</div>
<div class="thumb" style="top:286px;"><svg style="position:absolute;left:-1px;top:-1px" width="85.5" height="101" viewBox="0 0 85.5 101"><path d="M5.0,5.3 H80.6" stroke="#333" stroke-width="1"/><path d="M5.0,6.6 H8.2" stroke="#999" stroke-width="0.6"/><path d="M9.0,6.6 H12.8" stroke="#999" stroke-width="0.6"/><path d="M13.3,6.6 H14.8" stroke="#999" stroke-width="0.6"/><path d="M15.4,6.6 H17.9" stroke="#999" stroke-width="0.6"/><path d="M18.8,6.6 H22.7" stroke="#999" stroke-width="0.6"/><path d="M23.5,6.6 H26.9" stroke="#999" stroke-width="0.6"/><path d="M27.7,6.6 H29.7" stroke="#999" stroke-width="0.6"/><path d="M30.4,6.6 H32.5" stroke="#999" stroke-width="0.6"/><path d="M33.4,6.6 H35.1" stroke="#999" stroke-width="0.6"/><path d="M36.0,6.6 H37.8" stroke="#999" stroke-width="0.6"/><path d="M38.6,6.6 H41.2" stroke="#999" stroke-width="0.6"/><path d="M41.9,6.6 H46.3" stroke="#999" stroke-width="0.6"/><path d="M46.7,6.6 H48.5" stroke="#999" stroke-width="0.6"/><path d="M49.4,6.6 H52.7" stroke="#999" stroke-width="0.6"/><path d="M53.1,6.6 H58.1" stroke="#999" stroke-width="0.6"/><path d="M59.1,6.6 H61.0" stroke="#999" stroke-width="0.6"/><path d="M61.6,6.6 H63.6" stroke="#999" stroke-width="0.6"/><path d="M64.2,6.6 H67.9" stroke="#999" stroke-width="0.6"/><path d="M68.3,6.6 H72.3" stroke="#999" stroke-width="0.6"/><path d="M72.7,6.6 H74.8" stroke="#999" stroke-width="0.6"/><path d="M75.7,6.6 H78.6" stroke="#999" stroke-width="0.6"/><path d="M79.3,6.6 H80.6" stroke="#999" stroke-width="0.6"/><path d="M70.0,4.0 H72.8" stroke="#888" stroke-width="0.6"/><path d="M73.3,4.0 H77.3" stroke="#888" stroke-width="0.6"/><path d="M78.3,4.0 H80.6" stroke="#888" stroke-width="0.6"/><path d="M5.0,8.3 H80.6" stroke="#999" stroke-width="0.5"/><path d="M5.0,10.0 H80.6" stroke="#999" stroke-width="0.5"/><path d="M5.0,11.6 H80.6" stroke="#999" stroke-width="0.5"/><path d="M5.0,13.2 H80.6" stroke="#999" stroke-width="0.5"/><path d="M5.0,14.8 H80.6" stroke="#999" stroke-width="0.5"/><path d="M5.0,16.4 H80.6" stroke="#999" stroke-width="0.5"/><path d="M5.0,18.0 H80.6" stroke="#999" stroke-width="0.5"/><path d="M5.0,19.2 H80.6" stroke="#999" stroke-width="0.5"/><path d="M30.6,9.6 V20.0" stroke="#222" stroke-width="1"/><path d="M65.4,9.6 V20.0" stroke="#222" stroke-width="1"/><path d="M5.0,20.6 H80.6" stroke="#333" stroke-width="0.9"/><path d="M5.0,21.8 H7.7" stroke="#aaa" stroke-width="0.6"/><path d="M8.4,21.8 H12.3" stroke="#aaa" stroke-width="0.6"/><path d="M13.1,21.8 H15.0" stroke="#aaa" stroke-width="0.6"/><path d="M15.5,21.8 H18.3" stroke="#aaa" stroke-width="0.6"/><path d="M19.0,21.8 H23.3" stroke="#aaa" stroke-width="0.6"/><path d="M24.0,21.8 H25.6" stroke="#aaa" stroke-width="0.6"/><path d="M26.5,21.8 H29.5" stroke="#aaa" stroke-width="0.6"/><path d="M5.0,23.5 H80.6" stroke="#999" stroke-width="0.5"/><path d="M5.0,25.5 H80.6" stroke="#999" stroke-width="0.5"/><path d="M5.0,27.2 H80.6" stroke="#999" stroke-width="0.5"/><path d="M5.0,28.9 H80.6" stroke="#999" stroke-width="0.5"/><path d="M5.0,30.3 H80.6" stroke="#999" stroke-width="0.5"/><path d="M25.1,23.0 V31.0" stroke="#222" stroke-width="1"/><path d="M65.4,23.0 V31.0" stroke="#222" stroke-width="1"/><path d="M5.0,31.5 H80.6" stroke="#333" stroke-width="0.9"/><path d="M5.0,32.8 H7.3" stroke="#999" stroke-width="0.6"/><path d="M7.9,32.8 H10.8" stroke="#999" stroke-width="0.6"/><path d="M11.7,32.8 H13.5" stroke="#999" stroke-width="0.6"/><path d="M14.2,32.8 H16.4" stroke="#999" stroke-width="0.6"/><path d="M17.2,32.8 H18.8" stroke="#999" stroke-width="0.6"/><path d="M19.4,32.8 H22.1" stroke="#999" stroke-width="0.6"/><path d="M22.9,32.8 H24.5" stroke="#999" stroke-width="0.6"/><path d="M25.2,32.8 H27.5" stroke="#999" stroke-width="0.6"/><path d="M28.0,32.8 H31.2" stroke="#999" stroke-width="0.6"/><path d="M32.2,32.8 H35.4" stroke="#999" stroke-width="0.6"/><path d="M36.3,32.8 H38.4" stroke="#999" stroke-width="0.6"/><path d="M39.4,32.8 H42.1" stroke="#999" stroke-width="0.6"/><path d="M42.7,32.8 H46.8" stroke="#999" stroke-width="0.6"/><path d="M47.7,32.8 H49.2" stroke="#999" stroke-width="0.6"/><path d="M49.8,32.8 H54.0" stroke="#999" stroke-width="0.6"/><path d="M54.6,32.8 H57.0" stroke="#999" stroke-width="0.6"/><path d="M57.4,32.8 H59.0" stroke="#999" stroke-width="0.6"/><path d="M59.8,32.8 H64.7" stroke="#999" stroke-width="0.6"/><path d="M65.7,32.8 H69.0" stroke="#999" stroke-width="0.6"/><path d="M69.4,32.8 H72.0" stroke="#999" stroke-width="0.6"/><path d="M72.9,32.8 H77.3" stroke="#999" stroke-width="0.6"/><path d="M78.1,32.8 H80.4" stroke="#999" stroke-width="0.6"/><path d="M5.0,34.0 H80.6" stroke="#333" stroke-width="0.9"/><path d="M42.8,34.0 V47.4" stroke="#222" stroke-width="1.2"/><path d="M5.0,35.5 H8.2" stroke="#bbb" stroke-width="0.6"/><path d="M8.9,35.5 H11.4" stroke="#bbb" stroke-width="0.6"/><path d="M12.3,35.5 H17.0" stroke="#bbb" stroke-width="0.6"/><path d="M17.5,35.5 H20.0" stroke="#bbb" stroke-width="0.6"/><path d="M20.9,35.5 H23.4" stroke="#bbb" stroke-width="0.6"/><path d="M24.3,35.5 H27.6" stroke="#bbb" stroke-width="0.6"/><path d="M28.5,35.5 H32.4" stroke="#bbb" stroke-width="0.6"/><path d="M33.0,35.5 H35.5" stroke="#bbb" stroke-width="0.6"/><path d="M36.0,35.5 H39.9" stroke="#bbb" stroke-width="0.6"/><path d="M45.0,35.5 H47.0" stroke="#bbb" stroke-width="0.6"/><path d="M47.9,35.5 H50.9" stroke="#bbb" stroke-width="0.6"/><path d="M51.4,35.5 H54.4" stroke="#bbb" stroke-width="0.6"/><path d="M55.4,35.5 H58.9" stroke="#bbb" stroke-width="0.6"/><path d="M59.7,35.5 H64.4" stroke="#bbb" stroke-width="0.6"/><path d="M65.4,35.5 H69.5" stroke="#bbb" stroke-width="0.6"/><path d="M70.2,35.5 H73.7" stroke="#bbb" stroke-width="0.6"/><path d="M74.7,35.5 H78.9" stroke="#bbb" stroke-width="0.6"/><path d="M79.7,35.5 H80.6" stroke="#bbb" stroke-width="0.6"/><rect x="5.3" y="41.0" width="1.9" height="1.9" fill="#444"/><path d="M7.7,42.0 H11.8" stroke="#bbb" stroke-width="0.5"/><path d="M12.5,42.0 H13.2" stroke="#bbb" stroke-width="0.5"/><rect x="13.9" y="41.0" width="1.9" height="1.9" fill="#444"/><path d="M16.3,42.0 H21.0" stroke="#bbb" stroke-width="0.5"/><rect x="23.0" y="41.0" width="1.9" height="1.9" fill="#444"/><path d="M25.4,42.0 H30.0" stroke="#bbb" stroke-width="0.5"/><rect x="33.4" y="41.0" width="1.9" height="1.9" fill="#444"/><path d="M35.8,42.0 H39.2" stroke="#bbb" stroke-width="0.5"/><path d="M40.0,42.0 H41.3" stroke="#bbb" stroke-width="0.5"/><rect x="43.1" y="41.0" width="1.9" height="1.9" fill="#444"/><path d="M45.5,42.0 H48.2" stroke="#bbb" stroke-width="0.5"/><path d="M48.8,42.0 H51.0" stroke="#bbb" stroke-width="0.5"/><rect x="51.7" y="41.0" width="1.9" height="1.9" fill="#444"/><path d="M54.1,42.0 H57.5" stroke="#bbb" stroke-width="0.5"/><path d="M58.3,42.0 H59.6" stroke="#bbb" stroke-width="0.5"/><rect x="60.8" y="41.0" width="1.9" height="1.9" fill="#444"/><path d="M63.2,42.0 H67.2" stroke="#bbb" stroke-width="0.5"/><path d="M67.8,42.0 H68.7" stroke="#bbb" stroke-width="0.5"/><rect x="71.2" y="41.0" width="1.9" height="1.9" fill="#444"/><path d="M73.6,42.0 H76.2" stroke="#bbb" stroke-width="0.5"/><path d="M77.0,42.0 H79.0" stroke="#bbb" stroke-width="0.5"/><path d="M15.0,40.2 H17.6" stroke="#aaa" stroke-width="0.5"/><path d="M18.4,40.2 H22.6" stroke="#aaa" stroke-width="0.5"/><path d="M23.4,40.2 H28.0" stroke="#aaa" stroke-width="0.5"/><path d="M53.0,40.2 H54.6" stroke="#aaa" stroke-width="0.5"/><path d="M55.3,40.2 H58.3" stroke="#aaa" stroke-width="0.5"/><path d="M58.9,40.2 H62.7" stroke="#aaa" stroke-width="0.5"/><path d="M63.3,40.2 H65.6" stroke="#aaa" stroke-width="0.5"/><path d="M15.0,45.5 H28.0" stroke="#777" stroke-width="0.6"/><path d="M53.0,45.5 H66.0" stroke="#777" stroke-width="0.6"/><path d="M5.0,48.0 H80.6" stroke="#333" stroke-width="0.9"/><path d="M5.0,49.0 H9.8" stroke="#999" stroke-width="0.6"/><path d="M10.2,49.0 H13.0" stroke="#999" stroke-width="0.6"/><path d="M13.5,49.0 H15.7" stroke="#999" stroke-width="0.6"/><path d="M16.4,49.0 H18.7" stroke="#999" stroke-width="0.6"/><path d="M19.6,49.0 H22.9" stroke="#999" stroke-width="0.6"/><path d="M23.7,49.0 H25.8" stroke="#999" stroke-width="0.6"/><path d="M26.4,49.0 H30.1" stroke="#999" stroke-width="0.6"/><path d="M31.0,49.0 H33.3" stroke="#999" stroke-width="0.6"/><path d="M34.0,49.0 H38.5" stroke="#999" stroke-width="0.6"/><path d="M39.4,49.0 H41.7" stroke="#999" stroke-width="0.6"/><path d="M42.4,49.0 H46.6" stroke="#999" stroke-width="0.6"/><path d="M47.2,49.0 H51.1" stroke="#999" stroke-width="0.6"/><path d="M51.9,49.0 H56.8" stroke="#999" stroke-width="0.6"/><path d="M57.5,49.0 H61.4" stroke="#999" stroke-width="0.6"/><path d="M62.0,49.0 H66.1" stroke="#999" stroke-width="0.6"/><path d="M66.7,49.0 H69.9" stroke="#999" stroke-width="0.6"/><path d="M70.5,49.0 H73.1" stroke="#999" stroke-width="0.6"/><path d="M73.6,49.0 H75.9" stroke="#999" stroke-width="0.6"/><path d="M76.6,49.0 H79.0" stroke="#999" stroke-width="0.6"/><path d="M79.4,49.0 H80.6" stroke="#999" stroke-width="0.6"/><path d="M5.0,50.2 H80.6" stroke="#444" stroke-width="0.8"/><rect x="20.1" y="51.5" width="9.9" height="3.8" fill="#777"/><rect x="45.1" y="51.5" width="10.4" height="3.8" fill="#777"/><rect x="70.3" y="51.5" width="10.3" height="3.8" fill="#777"/><path d="M6.0,53.0 H10.8" stroke="#bbb" stroke-width="0.6"/><path d="M11.5,53.0 H14.4" stroke="#bbb" stroke-width="0.6"/><path d="M15.3,53.0 H18.5" stroke="#bbb" stroke-width="0.6"/><path d="M32.0,53.0 H33.9" stroke="#bbb" stroke-width="0.6"/><path d="M34.7,53.0 H39.2" stroke="#bbb" stroke-width="0.6"/><path d="M39.9,53.0 H43.5" stroke="#bbb" stroke-width="0.6"/><path d="M57.5,53.0 H61.2" stroke="#bbb" stroke-width="0.6"/><path d="M61.7,53.0 H64.6" stroke="#bbb" stroke-width="0.6"/><path d="M65.3,53.0 H68.1" stroke="#bbb" stroke-width="0.6"/><path d="M68.8,53.0 H68.8" stroke="#bbb" stroke-width="0.6"/><path d="M5.0,55.7 H80.6" stroke="#444" stroke-width="0.8"/><path d="M5.0,57.0 H7.2" stroke="#999" stroke-width="0.6"/><path d="M7.8,57.0 H12.7" stroke="#999" stroke-width="0.6"/><path d="M13.4,57.0 H15.1" stroke="#999" stroke-width="0.6"/><path d="M16.0,57.0 H20.5" stroke="#999" stroke-width="0.6"/><path d="M21.4,57.0 H24.2" stroke="#999" stroke-width="0.6"/><path d="M25.0,57.0 H27.6" stroke="#999" stroke-width="0.6"/><path d="M28.1,57.0 H32.6" stroke="#999" stroke-width="0.6"/><path d="M33.5,57.0 H35.7" stroke="#999" stroke-width="0.6"/><path d="M36.7,57.0 H38.2" stroke="#999" stroke-width="0.6"/><path d="M38.8,57.0 H40.0" stroke="#999" stroke-width="0.6"/><rect x="1.3" y="57.8" width="3.1" height="1.8" fill="#666"/><rect x="22.7" y="61.5" width="9.7" height="31.0" fill="#a3a3a3"/><rect x="33.0" y="61.5" width="9.8" height="31.0" fill="#a3a3a3"/><rect x="59.9" y="58.5" width="9.8" height="34.0" fill="#a3a3a3"/><rect x="70.3" y="58.5" width="10.3" height="34.0" fill="#a3a3a3"/><path d="M22.7,62.0 H42.8" stroke="#e8e8e8" stroke-width="0.8"/><path d="M22.7,68.5 H42.8" stroke="#e8e8e8" stroke-width="0.8"/><path d="M22.7,71.5 H42.8" stroke="#e8e8e8" stroke-width="0.8"/><path d="M22.7,75.0 H42.8" stroke="#e8e8e8" stroke-width="0.8"/><path d="M22.7,82.0 H42.8" stroke="#e8e8e8" stroke-width="0.8"/><path d="M22.7,85.0 H42.8" stroke="#e8e8e8" stroke-width="0.8"/><path d="M22.7,88.5 H42.8" stroke="#e8e8e8" stroke-width="0.8"/><path d="M59.9,60.0 H80.6" stroke="#e8e8e8" stroke-width="0.8"/><path d="M59.9,64.5 H80.6" stroke="#e8e8e8" stroke-width="0.8"/><path d="M59.9,66.0 H80.6" stroke="#e8e8e8" stroke-width="0.8"/><path d="M59.9,68.5 H80.6" stroke="#e8e8e8" stroke-width="0.8"/><path d="M59.9,77.0 H80.6" stroke="#e8e8e8" stroke-width="0.8"/><path d="M59.9,80.0 H80.6" stroke="#e8e8e8" stroke-width="0.8"/><path d="M59.9,84.0 H80.6" stroke="#e8e8e8" stroke-width="0.8"/><path d="M22.7,58.0 V92.5" stroke="#222" stroke-width="0.9"/><path d="M32.6,58.0 V92.5" stroke="#222" stroke-width="0.9"/><path d="M42.8,58.0 V92.5" stroke="#222" stroke-width="0.9"/><path d="M59.9,58.0 V92.5" stroke="#222" stroke-width="0.9"/><path d="M70.0,58.0 V92.5" stroke="#222" stroke-width="0.9"/><path d="M80.3,58.0 V92.5" stroke="#222" stroke-width="0.9"/><path d="M6.0,60.0 H8.3" stroke="#aaa" stroke-width="0.5"/><path d="M8.8,60.0 H11.7" stroke="#aaa" stroke-width="0.5"/><path d="M12.2,60.0 H13.9" stroke="#aaa" stroke-width="0.5"/><path d="M14.5,60.0 H19.3" stroke="#aaa" stroke-width="0.5"/><path d="M20.1,60.0 H21.0" stroke="#aaa" stroke-width="0.5"/><path d="M44.0,60.0 H47.4" stroke="#aaa" stroke-width="0.5"/><path d="M47.9,60.0 H50.0" stroke="#aaa" stroke-width="0.5"/><path d="M50.5,60.0 H52.8" stroke="#aaa" stroke-width="0.5"/><path d="M53.7,60.0 H58.1" stroke="#aaa" stroke-width="0.5"/><path d="M6.0,63.0 H10.3" stroke="#aaa" stroke-width="0.5"/><path d="M10.8,63.0 H13.4" stroke="#aaa" stroke-width="0.5"/><path d="M14.2,63.0 H18.2" stroke="#aaa" stroke-width="0.5"/><path d="M19.2,63.0 H21.0" stroke="#aaa" stroke-width="0.5"/><path d="M44.0,63.0 H47.6" stroke="#aaa" stroke-width="0.5"/><path d="M48.4,63.0 H51.7" stroke="#aaa" stroke-width="0.5"/><path d="M52.2,63.0 H55.4" stroke="#aaa" stroke-width="0.5"/><path d="M55.8,63.0 H58.5" stroke="#aaa" stroke-width="0.5"/><path d="M6.0,66.0 H9.4" stroke="#aaa" stroke-width="0.5"/><path d="M10.0,66.0 H14.7" stroke="#aaa" stroke-width="0.5"/><path d="M15.4,66.0 H20.0" stroke="#aaa" stroke-width="0.5"/><path d="M20.9,66.0 H21.0" stroke="#aaa" stroke-width="0.5"/><path d="M44.0,66.0 H47.6" stroke="#aaa" stroke-width="0.5"/><path d="M48.3,66.0 H50.3" stroke="#aaa" stroke-width="0.5"/><path d="M50.9,66.0 H55.2" stroke="#aaa" stroke-width="0.5"/><path d="M55.7,66.0 H57.3" stroke="#aaa" stroke-width="0.5"/><path d="M58.1,66.0 H58.5" stroke="#aaa" stroke-width="0.5"/><path d="M6.0,69.0 H9.1" stroke="#aaa" stroke-width="0.5"/><path d="M9.8,69.0 H14.7" stroke="#aaa" stroke-width="0.5"/><path d="M15.3,69.0 H18.2" stroke="#aaa" stroke-width="0.5"/><path d="M18.7,69.0 H21.0" stroke="#aaa" stroke-width="0.5"/><path d="M44.0,69.0 H46.7" stroke="#aaa" stroke-width="0.5"/><path d="M47.6,69.0 H50.2" stroke="#aaa" stroke-width="0.5"/><path d="M51.0,69.0 H55.6" stroke="#aaa" stroke-width="0.5"/><path d="M56.1,69.0 H57.8" stroke="#aaa" stroke-width="0.5"/><path d="M58.3,69.0 H58.5" stroke="#aaa" stroke-width="0.5"/><path d="M6.0,72.0 H8.3" stroke="#aaa" stroke-width="0.5"/><path d="M8.9,72.0 H11.1" stroke="#aaa" stroke-width="0.5"/><path d="M11.7,72.0 H13.4" stroke="#aaa" stroke-width="0.5"/><path d="M14.2,72.0 H18.8" stroke="#aaa" stroke-width="0.5"/><path d="M19.8,72.0 H21.0" stroke="#aaa" stroke-width="0.5"/><path d="M44.0,72.0 H45.6" stroke="#aaa" stroke-width="0.5"/><path d="M46.1,72.0 H51.0" stroke="#aaa" stroke-width="0.5"/><path d="M51.9,72.0 H54.8" stroke="#aaa" stroke-width="0.5"/><path d="M55.8,72.0 H58.5" stroke="#aaa" stroke-width="0.5"/><path d="M6.0,75.0 H8.5" stroke="#aaa" stroke-width="0.5"/><path d="M9.0,75.0 H12.1" stroke="#aaa" stroke-width="0.5"/><path d="M12.6,75.0 H15.4" stroke="#aaa" stroke-width="0.5"/><path d="M16.4,75.0 H19.1" stroke="#aaa" stroke-width="0.5"/><path d="M19.5,75.0 H21.0" stroke="#aaa" stroke-width="0.5"/><path d="M44.0,75.0 H48.2" stroke="#aaa" stroke-width="0.5"/><path d="M48.9,75.0 H51.4" stroke="#aaa" stroke-width="0.5"/><path d="M51.8,75.0 H56.8" stroke="#aaa" stroke-width="0.5"/><path d="M57.4,75.0 H58.5" stroke="#aaa" stroke-width="0.5"/><path d="M6.0,78.0 H7.7" stroke="#aaa" stroke-width="0.5"/><path d="M8.2,78.0 H12.1" stroke="#aaa" stroke-width="0.5"/><path d="M12.6,78.0 H14.2" stroke="#aaa" stroke-width="0.5"/><path d="M14.9,78.0 H17.3" stroke="#aaa" stroke-width="0.5"/><path d="M18.3,78.0 H20.2" stroke="#aaa" stroke-width="0.5"/><path d="M20.9,78.0 H21.0" stroke="#aaa" stroke-width="0.5"/><path d="M44.0,78.0 H49.0" stroke="#aaa" stroke-width="0.5"/><path d="M49.6,78.0 H52.0" stroke="#aaa" stroke-width="0.5"/><path d="M52.6,78.0 H54.3" stroke="#aaa" stroke-width="0.5"/><path d="M54.9,78.0 H57.3" stroke="#aaa" stroke-width="0.5"/><path d="M58.2,78.0 H58.5" stroke="#aaa" stroke-width="0.5"/><path d="M6.0,81.0 H7.6" stroke="#aaa" stroke-width="0.5"/><path d="M8.2,81.0 H10.5" stroke="#aaa" stroke-width="0.5"/><path d="M11.0,81.0 H13.3" stroke="#aaa" stroke-width="0.5"/><path d="M14.3,81.0 H16.3" stroke="#aaa" stroke-width="0.5"/><path d="M16.7,81.0 H21.0" stroke="#aaa" stroke-width="0.5"/><path d="M44.0,81.0 H49.0" stroke="#aaa" stroke-width="0.5"/><path d="M49.6,81.0 H54.3" stroke="#aaa" stroke-width="0.5"/><path d="M55.1,81.0 H58.5" stroke="#aaa" stroke-width="0.5"/><path d="M6.0,84.0 H9.2" stroke="#aaa" stroke-width="0.5"/><path d="M9.7,84.0 H11.9" stroke="#aaa" stroke-width="0.5"/><path d="M12.8,84.0 H17.5" stroke="#aaa" stroke-width="0.5"/><path d="M18.5,84.0 H21.0" stroke="#aaa" stroke-width="0.5"/><path d="M44.0,84.0 H48.3" stroke="#aaa" stroke-width="0.5"/><path d="M49.1,84.0 H53.4" stroke="#aaa" stroke-width="0.5"/><path d="M54.2,84.0 H57.9" stroke="#aaa" stroke-width="0.5"/><path d="M6.0,87.0 H8.4" stroke="#aaa" stroke-width="0.5"/><path d="M9.4,87.0 H14.2" stroke="#aaa" stroke-width="0.5"/><path d="M14.7,87.0 H19.6" stroke="#aaa" stroke-width="0.5"/><path d="M20.6,87.0 H21.0" stroke="#aaa" stroke-width="0.5"/><path d="M44.0,87.0 H48.6" stroke="#aaa" stroke-width="0.5"/><path d="M49.1,87.0 H54.0" stroke="#aaa" stroke-width="0.5"/><path d="M54.8,87.0 H56.5" stroke="#aaa" stroke-width="0.5"/><path d="M57.0,87.0 H58.5" stroke="#aaa" stroke-width="0.5"/><path d="M6.0,90.0 H10.1" stroke="#aaa" stroke-width="0.5"/><path d="M11.1,90.0 H13.3" stroke="#aaa" stroke-width="0.5"/><path d="M13.7,90.0 H18.5" stroke="#aaa" stroke-width="0.5"/><path d="M18.9,90.0 H21.0" stroke="#aaa" stroke-width="0.5"/><path d="M44.0,90.0 H48.3" stroke="#aaa" stroke-width="0.5"/><path d="M49.2,90.0 H53.8" stroke="#aaa" stroke-width="0.5"/><path d="M54.5,90.0 H58.5" stroke="#aaa" stroke-width="0.5"/><path d="M5.0,92.6 H80.6" stroke="#333" stroke-width="1"/><path d="M5.0,94.4 H80.6" stroke="#888" stroke-width="0.5"/><path d="M5.0,97.4 H80.6" stroke="#888" stroke-width="0.5"/><path d="M38.0,92.6 V97.4" stroke="#333" stroke-width="0.9"/><path d="M71.0,92.6 V97.4" stroke="#333" stroke-width="0.9"/></svg></div>
<div class="pn" style="top:394.5px">2</div>
<div class="thumb" style="top:417px;"><svg style="position:absolute;left:-1px;top:-1px" width="85.5" height="101" viewBox="0 0 85.5 101"><path d="M5.0,4.9 H80.6" stroke="#333" stroke-width="1"/><path d="M14.3,6.7 H16.7" stroke="#666" stroke-width="1.0"/><path d="M17.5,6.7 H21.4" stroke="#666" stroke-width="1.0"/><path d="M22.3,6.7 H24.5" stroke="#666" stroke-width="1.0"/><path d="M25.0,6.7 H27.0" stroke="#666" stroke-width="1.0"/><path d="M27.6,6.7 H31.6" stroke="#666" stroke-width="1.0"/><path d="M32.1,6.7 H35.5" stroke="#666" stroke-width="1.0"/><path d="M36.0,6.7 H38.5" stroke="#666" stroke-width="1.0"/><path d="M39.2,6.7 H43.6" stroke="#666" stroke-width="1.0"/><path d="M44.4,6.7 H45.9" stroke="#666" stroke-width="1.0"/><path d="M46.5,6.7 H48.5" stroke="#666" stroke-width="1.0"/><path d="M49.4,6.7 H53.8" stroke="#666" stroke-width="1.0"/><path d="M54.7,6.7 H59.0" stroke="#666" stroke-width="1.0"/><path d="M59.9,6.7 H64.7" stroke="#666" stroke-width="1.0"/><path d="M65.6,6.7 H68.0" stroke="#666" stroke-width="1.0"/><path d="M68.9,6.7 H71.0" stroke="#666" stroke-width="1.0"/><path d="M72.0,4.0 H75.5" stroke="#999" stroke-width="0.5"/><path d="M76.1,4.0 H78.9" stroke="#999" stroke-width="0.5"/><path d="M79.6,4.0 H80.6" stroke="#999" stroke-width="0.5"/><path d="M5.0,9.7 H8.9" stroke="#777" stroke-width="0.6"/><path d="M9.7,9.7 H13.8" stroke="#777" stroke-width="0.6"/><path d="M14.3,9.7 H18.1" stroke="#777" stroke-width="0.6"/><path d="M18.8,9.7 H20.9" stroke="#777" stroke-width="0.6"/><path d="M21.4,9.7 H24.8" stroke="#777" stroke-width="0.6"/><path d="M5.0,10.9 H9.6" stroke="#a9a9a9" stroke-width="0.6"/><path d="M10.4,10.9 H13.8" stroke="#a9a9a9" stroke-width="0.6"/><path d="M14.5,10.9 H19.1" stroke="#a9a9a9" stroke-width="0.6"/><path d="M19.9,10.9 H21.9" stroke="#a9a9a9" stroke-width="0.6"/><path d="M22.6,10.9 H26.3" stroke="#a9a9a9" stroke-width="0.6"/><path d="M26.9,10.9 H28.5" stroke="#a9a9a9" stroke-width="0.6"/><path d="M29.1,10.9 H33.0" stroke="#a9a9a9" stroke-width="0.6"/><path d="M5.0,12.2 H8.7" stroke="#777" stroke-width="0.6"/><path d="M9.2,12.2 H12.2" stroke="#777" stroke-width="0.6"/><path d="M13.1,12.2 H17.7" stroke="#777" stroke-width="0.6"/><path d="M18.6,12.2 H20.8" stroke="#777" stroke-width="0.6"/><path d="M21.7,12.2 H24.5" stroke="#777" stroke-width="0.6"/><path d="M5.0,14.8 H8.2" stroke="#a9a9a9" stroke-width="0.6"/><path d="M9.2,14.8 H10.8" stroke="#a9a9a9" stroke-width="0.6"/><path d="M11.6,14.8 H13.3" stroke="#a9a9a9" stroke-width="0.6"/><path d="M14.0,14.8 H17.5" stroke="#a9a9a9" stroke-width="0.6"/><path d="M18.0,14.8 H20.2" stroke="#a9a9a9" stroke-width="0.6"/><path d="M21.1,14.8 H24.5" stroke="#a9a9a9" stroke-width="0.6"/><path d="M25.4,14.8 H27.5" stroke="#a9a9a9" stroke-width="0.6"/><path d="M28.2,14.8 H31.8" stroke="#a9a9a9" stroke-width="0.6"/><path d="M32.7,14.8 H33.0" stroke="#a9a9a9" stroke-width="0.6"/><path d="M5.0,16.0 H6.5" stroke="#a9a9a9" stroke-width="0.6"/><path d="M7.5,16.0 H9.4" stroke="#a9a9a9" stroke-width="0.6"/><path d="M10.0,16.0 H12.5" stroke="#a9a9a9" stroke-width="0.6"/><path d="M13.2,16.0 H15.0" stroke="#a9a9a9" stroke-width="0.6"/><path d="M15.7,16.0 H18.5" stroke="#a9a9a9" stroke-width="0.6"/><path d="M19.4,16.0 H20.9" stroke="#a9a9a9" stroke-width="0.6"/><path d="M21.5,16.0 H24.7" stroke="#a9a9a9" stroke-width="0.6"/><path d="M5.0,17.2 H7.2" stroke="#a9a9a9" stroke-width="0.6"/><path d="M8.1,17.2 H10.9" stroke="#a9a9a9" stroke-width="0.6"/><path d="M11.7,17.2 H13.8" stroke="#a9a9a9" stroke-width="0.6"/><path d="M14.3,17.2 H17.3" stroke="#a9a9a9" stroke-width="0.6"/><path d="M18.2,17.2 H20.4" stroke="#a9a9a9" stroke-width="0.6"/><path d="M21.1,17.2 H23.4" stroke="#a9a9a9" stroke-width="0.6"/><path d="M24.3,17.2 H27.8" stroke="#a9a9a9" stroke-width="0.6"/><path d="M28.5,17.2 H32.2" stroke="#a9a9a9" stroke-width="0.6"/><path d="M32.9,17.2 H35.5" stroke="#a9a9a9" stroke-width="0.6"/><path d="M36.2,17.2 H37.9" stroke="#a9a9a9" stroke-width="0.6"/><path d="M38.3,17.2 H39.0" stroke="#a9a9a9" stroke-width="0.6"/><path d="M5.0,18.5 H8.4" stroke="#a9a9a9" stroke-width="0.6"/><path d="M9.0,18.5 H11.6" stroke="#a9a9a9" stroke-width="0.6"/><path d="M12.2,18.5 H14.2" stroke="#a9a9a9" stroke-width="0.6"/><path d="M15.1,18.5 H17.0" stroke="#a9a9a9" stroke-width="0.6"/><path d="M17.9,18.5 H20.2" stroke="#a9a9a9" stroke-width="0.6"/><path d="M20.7,18.5 H23.6" stroke="#a9a9a9" stroke-width="0.6"/><path d="M24.0,18.5 H26.0" stroke="#a9a9a9" stroke-width="0.6"/><path d="M26.6,18.5 H29.6" stroke="#a9a9a9" stroke-width="0.6"/><path d="M30.6,18.5 H35.5" stroke="#a9a9a9" stroke-width="0.6"/><path d="M36.0,18.5 H39.0" stroke="#a9a9a9" stroke-width="0.6"/><path d="M5.0,19.8 H9.6" stroke="#a9a9a9" stroke-width="0.6"/><path d="M10.4,19.8 H15.1" stroke="#a9a9a9" stroke-width="0.6"/><path d="M16.0,19.8 H20.7" stroke="#a9a9a9" stroke-width="0.6"/><path d="M21.5,19.8 H23.4" stroke="#a9a9a9" stroke-width="0.6"/><path d="M24.3,19.8 H26.1" stroke="#a9a9a9" stroke-width="0.6"/><path d="M26.6,19.8 H31.0" stroke="#a9a9a9" stroke-width="0.6"/><path d="M31.4,19.8 H33.8" stroke="#a9a9a9" stroke-width="0.6"/><path d="M34.7,19.8 H37.0" stroke="#a9a9a9" stroke-width="0.6"/><path d="M37.9,19.8 H41.0" stroke="#a9a9a9" stroke-width="0.6"/><path d="M5.0,21.0 H9.6" stroke="#777" stroke-width="0.6"/><path d="M10.1,21.0 H12.1" stroke="#777" stroke-width="0.6"/><path d="M12.8,21.0 H17.2" stroke="#777" stroke-width="0.6"/><path d="M17.9,21.0 H20.4" stroke="#777" stroke-width="0.6"/><path d="M21.4,21.0 H23.9" stroke="#777" stroke-width="0.6"/><path d="M24.4,21.0 H26.1" stroke="#777" stroke-width="0.6"/><path d="M26.5,21.0 H30.5" stroke="#777" stroke-width="0.6"/><path d="M31.0,21.0 H35.0" stroke="#777" stroke-width="0.6"/><path d="M35.9,21.0 H40.0" stroke="#777" stroke-width="0.6"/><path d="M5.0,22.2 H8.9" stroke="#777" stroke-width="0.6"/><path d="M9.7,22.2 H14.4" stroke="#777" stroke-width="0.6"/><path d="M14.8,22.2 H16.7" stroke="#777" stroke-width="0.6"/><path d="M17.3,22.2 H20.2" stroke="#777" stroke-width="0.6"/><path d="M20.8,22.2 H22.8" stroke="#777" stroke-width="0.6"/><path d="M23.3,22.2 H25.9" stroke="#777" stroke-width="0.6"/><path d="M26.6,22.2 H29.9" stroke="#777" stroke-width="0.6"/><path d="M30.5,22.2 H32.8" stroke="#777" stroke-width="0.6"/><path d="M5.0,23.5 H10.0" stroke="#a9a9a9" stroke-width="0.6"/><path d="M10.8,23.5 H14.0" stroke="#a9a9a9" stroke-width="0.6"/><path d="M14.6,23.5 H17.7" stroke="#a9a9a9" stroke-width="0.6"/><path d="M18.6,23.5 H22.0" stroke="#a9a9a9" stroke-width="0.6"/><path d="M22.5,23.5 H25.3" stroke="#a9a9a9" stroke-width="0.6"/><path d="M26.0,23.5 H28.2" stroke="#a9a9a9" stroke-width="0.6"/><path d="M28.9,23.5 H30.6" stroke="#a9a9a9" stroke-width="0.6"/><path d="M31.5,23.5 H33.6" stroke="#a9a9a9" stroke-width="0.6"/><path d="M34.0,23.5 H37.6" stroke="#a9a9a9" stroke-width="0.6"/><path d="M38.2,23.5 H41.0" stroke="#a9a9a9" stroke-width="0.6"/><path d="M5.0,24.8 H9.1" stroke="#a9a9a9" stroke-width="0.6"/><path d="M9.9,24.8 H12.9" stroke="#a9a9a9" stroke-width="0.6"/><path d="M13.9,24.8 H15.5" stroke="#a9a9a9" stroke-width="0.6"/><path d="M16.4,24.8 H18.4" stroke="#a9a9a9" stroke-width="0.6"/><path d="M19.3,24.8 H21.3" stroke="#a9a9a9" stroke-width="0.6"/><path d="M21.7,24.8 H25.0" stroke="#a9a9a9" stroke-width="0.6"/><path d="M26.0,24.8 H28.4" stroke="#a9a9a9" stroke-width="0.6"/><path d="M29.0,24.8 H32.7" stroke="#a9a9a9" stroke-width="0.6"/><path d="M33.2,24.8 H36.6" stroke="#a9a9a9" stroke-width="0.6"/><path d="M37.0,24.8 H40.0" stroke="#a9a9a9" stroke-width="0.6"/><path d="M5.0,26.0 H8.3" stroke="#a9a9a9" stroke-width="0.6"/><path d="M9.3,26.0 H11.7" stroke="#a9a9a9" stroke-width="0.6"/><path d="M12.4,26.0 H13.9" stroke="#a9a9a9" stroke-width="0.6"/><path d="M14.5,26.0 H16.5" stroke="#a9a9a9" stroke-width="0.6"/><path d="M17.2,26.0 H20.0" stroke="#a9a9a9" stroke-width="0.6"/><path d="M20.4,26.0 H23.1" stroke="#a9a9a9" stroke-width="0.6"/><path d="M23.7,26.0 H26.2" stroke="#a9a9a9" stroke-width="0.6"/><path d="M26.6,26.0 H30.6" stroke="#a9a9a9" stroke-width="0.6"/><path d="M31.1,26.0 H33.2" stroke="#a9a9a9" stroke-width="0.6"/><path d="M33.7,26.0 H37.1" stroke="#a9a9a9" stroke-width="0.6"/><path d="M37.6,26.0 H40.0" stroke="#a9a9a9" stroke-width="0.6"/><path d="M5.0,27.2 H9.4" stroke="#a9a9a9" stroke-width="0.6"/><path d="M10.1,27.2 H13.6" stroke="#a9a9a9" stroke-width="0.6"/><path d="M14.2,27.2 H19.0" stroke="#a9a9a9" stroke-width="0.6"/><path d="M19.6,27.2 H24.5" stroke="#a9a9a9" stroke-width="0.6"/><path d="M25.1,27.2 H28.9" stroke="#a9a9a9" stroke-width="0.6"/><path d="M29.9,27.2 H33.8" stroke="#a9a9a9" stroke-width="0.6"/><path d="M34.4,27.2 H36.2" stroke="#a9a9a9" stroke-width="0.6"/><path d="M36.8,27.2 H39.8" stroke="#a9a9a9" stroke-width="0.6"/><path d="M40.7,27.2 H41.0" stroke="#a9a9a9" stroke-width="0.6"/><path d="M5.0,28.5 H9.6" stroke="#a9a9a9" stroke-width="0.6"/><path d="M10.1,28.5 H12.4" stroke="#a9a9a9" stroke-width="0.6"/><path d="M12.8,28.5 H16.2" stroke="#a9a9a9" stroke-width="0.6"/><path d="M17.2,28.5 H21.6" stroke="#a9a9a9" stroke-width="0.6"/><path d="M22.4,28.5 H25.4" stroke="#a9a9a9" stroke-width="0.6"/><path d="M26.1,28.5 H27.6" stroke="#a9a9a9" stroke-width="0.6"/><path d="M28.4,28.5 H33.0" stroke="#a9a9a9" stroke-width="0.6"/><path d="M33.8,28.5 H37.6" stroke="#a9a9a9" stroke-width="0.6"/><path d="M38.6,28.5 H39.0" stroke="#a9a9a9" stroke-width="0.6"/><path d="M5.0,29.8 H7.1" stroke="#a9a9a9" stroke-width="0.6"/><path d="M7.6,29.8 H10.6" stroke="#a9a9a9" stroke-width="0.6"/><path d="M11.6,29.8 H13.7" stroke="#a9a9a9" stroke-width="0.6"/><path d="M14.6,29.8 H17.5" stroke="#a9a9a9" stroke-width="0.6"/><path d="M18.0,29.8 H21.2" stroke="#a9a9a9" stroke-width="0.6"/><path d="M21.9,29.8 H23.8" stroke="#a9a9a9" stroke-width="0.6"/><path d="M24.4,29.8 H26.1" stroke="#a9a9a9" stroke-width="0.6"/><path d="M27.0,29.8 H31.2" stroke="#a9a9a9" stroke-width="0.6"/><path d="M32.0,29.8 H33.9" stroke="#a9a9a9" stroke-width="0.6"/><path d="M34.7,29.8 H37.3" stroke="#a9a9a9" stroke-width="0.6"/><path d="M37.9,29.8 H40.0" stroke="#a9a9a9" stroke-width="0.6"/><path d="M5.0,31.0 H7.5" stroke="#777" stroke-width="0.6"/><path d="M8.3,31.0 H10.1" stroke="#777" stroke-width="0.6"/><path d="M10.9,31.0 H13.0" stroke="#777" stroke-width="0.6"/><path d="M13.9,31.0 H18.8" stroke="#777" stroke-width="0.6"/><path d="M19.3,31.0 H23.7" stroke="#777" stroke-width="0.6"/><path d="M24.2,31.0 H26.8" stroke="#777" stroke-width="0.6"/><path d="M27.2,31.0 H30.3" stroke="#777" stroke-width="0.6"/><path d="M30.7,31.0 H34.7" stroke="#777" stroke-width="0.6"/><path d="M35.5,31.0 H38.4" stroke="#777" stroke-width="0.6"/><path d="M5.0,32.2 H6.9" stroke="#777" stroke-width="0.6"/><path d="M7.8,32.2 H11.0" stroke="#777" stroke-width="0.6"/><path d="M11.8,32.2 H16.0" stroke="#777" stroke-width="0.6"/><path d="M16.9,32.2 H19.3" stroke="#777" stroke-width="0.6"/><path d="M19.8,32.2 H24.5" stroke="#777" stroke-width="0.6"/><path d="M25.3,32.2 H29.0" stroke="#777" stroke-width="0.6"/><path d="M29.5,32.2 H32.2" stroke="#777" stroke-width="0.6"/><path d="M32.9,32.2 H35.9" stroke="#777" stroke-width="0.6"/><path d="M36.5,32.2 H39.2" stroke="#777" stroke-width="0.6"/><path d="M39.8,32.2 H41.0" stroke="#777" stroke-width="0.6"/><path d="M5.0,33.5 H9.8" stroke="#a9a9a9" stroke-width="0.6"/><path d="M10.7,33.5 H14.3" stroke="#a9a9a9" stroke-width="0.6"/><path d="M15.1,33.5 H18.4" stroke="#a9a9a9" stroke-width="0.6"/><path d="M19.1,33.5 H23.5" stroke="#a9a9a9" stroke-width="0.6"/><path d="M24.2,33.5 H27.0" stroke="#a9a9a9" stroke-width="0.6"/><path d="M27.5,33.5 H31.7" stroke="#a9a9a9" stroke-width="0.6"/><path d="M32.3,33.5 H35.3" stroke="#a9a9a9" stroke-width="0.6"/><path d="M35.9,33.5 H39.3" stroke="#a9a9a9" stroke-width="0.6"/><path d="M40.0,33.5 H40.0" stroke="#a9a9a9" stroke-width="0.6"/><path d="M5.0,34.8 H8.4" stroke="#a9a9a9" stroke-width="0.6"/><path d="M9.2,34.8 H13.3" stroke="#a9a9a9" stroke-width="0.6"/><path d="M14.1,34.8 H18.7" stroke="#a9a9a9" stroke-width="0.6"/><path d="M19.5,34.8 H22.9" stroke="#a9a9a9" stroke-width="0.6"/><path d="M23.4,34.8 H25.8" stroke="#a9a9a9" stroke-width="0.6"/><path d="M26.4,34.8 H29.7" stroke="#a9a9a9" stroke-width="0.6"/><path d="M30.6,34.8 H32.3" stroke="#a9a9a9" stroke-width="0.6"/><path d="M32.9,34.8 H37.0" stroke="#a9a9a9" stroke-width="0.6"/><path d="M37.6,34.8 H39.0" stroke="#a9a9a9" stroke-width="0.6"/><path d="M5.0,36.0 H7.9" stroke="#777" stroke-width="0.6"/><path d="M8.5,36.0 H10.8" stroke="#777" stroke-width="0.6"/><path d="M11.6,36.0 H13.8" stroke="#777" stroke-width="0.6"/><path d="M14.7,36.0 H16.9" stroke="#777" stroke-width="0.6"/><path d="M17.3,36.0 H18.9" stroke="#777" stroke-width="0.6"/><path d="M19.6,36.0 H23.5" stroke="#777" stroke-width="0.6"/><path d="M24.1,36.0 H28.8" stroke="#777" stroke-width="0.6"/><path d="M29.5,36.0 H34.1" stroke="#777" stroke-width="0.6"/><path d="M34.7,36.0 H38.0" stroke="#777" stroke-width="0.6"/><path d="M38.7,36.0 H39.0" stroke="#777" stroke-width="0.6"/><path d="M5.0,37.2 H6.7" stroke="#a9a9a9" stroke-width="0.6"/><path d="M7.6,37.2 H11.3" stroke="#a9a9a9" stroke-width="0.6"/><path d="M11.9,37.2 H13.8" stroke="#a9a9a9" stroke-width="0.6"/><path d="M14.4,37.2 H19.2" stroke="#a9a9a9" stroke-width="0.6"/><path d="M20.1,37.2 H23.2" stroke="#a9a9a9" stroke-width="0.6"/><path d="M23.7,37.2 H25.0" stroke="#a9a9a9" stroke-width="0.6"/><path d="M5.0,38.5 H7.0" stroke="#a9a9a9" stroke-width="0.6"/><path d="M7.5,38.5 H11.9" stroke="#a9a9a9" stroke-width="0.6"/><path d="M12.9,38.5 H15.0" stroke="#a9a9a9" stroke-width="0.6"/><path d="M15.4,38.5 H17.5" stroke="#a9a9a9" stroke-width="0.6"/><path d="M18.2,38.5 H20.4" stroke="#a9a9a9" stroke-width="0.6"/><path d="M21.4,38.5 H22.9" stroke="#a9a9a9" stroke-width="0.6"/><path d="M23.7,38.5 H25.5" stroke="#a9a9a9" stroke-width="0.6"/><path d="M26.3,38.5 H28.1" stroke="#a9a9a9" stroke-width="0.6"/><path d="M28.8,38.5 H31.7" stroke="#a9a9a9" stroke-width="0.6"/><path d="M32.5,38.5 H34.7" stroke="#a9a9a9" stroke-width="0.6"/><path d="M35.6,38.5 H39.0" stroke="#a9a9a9" stroke-width="0.6"/><path d="M5.0,39.8 H10.0" stroke="#a9a9a9" stroke-width="0.6"/><path d="M10.5,39.8 H14.2" stroke="#a9a9a9" stroke-width="0.6"/><path d="M15.0,39.8 H17.1" stroke="#a9a9a9" stroke-width="0.6"/><path d="M17.6,39.8 H19.9" stroke="#a9a9a9" stroke-width="0.6"/><path d="M20.6,39.8 H24.9" stroke="#a9a9a9" stroke-width="0.6"/><path d="M25.7,39.8 H29.2" stroke="#a9a9a9" stroke-width="0.6"/><path d="M29.6,39.8 H33.7" stroke="#a9a9a9" stroke-width="0.6"/><path d="M34.4,39.8 H36.5" stroke="#a9a9a9" stroke-width="0.6"/><path d="M37.2,39.8 H39.0" stroke="#a9a9a9" stroke-width="0.6"/><path d="M5.0,41.0 H8.0" stroke="#a9a9a9" stroke-width="0.6"/><path d="M8.6,41.0 H12.4" stroke="#a9a9a9" stroke-width="0.6"/><path d="M13.3,41.0 H15.8" stroke="#a9a9a9" stroke-width="0.6"/><path d="M16.6,41.0 H19.7" stroke="#a9a9a9" stroke-width="0.6"/><path d="M20.2,41.0 H22.7" stroke="#a9a9a9" stroke-width="0.6"/><path d="M23.4,41.0 H27.7" stroke="#a9a9a9" stroke-width="0.6"/><path d="M28.5,41.0 H30.0" stroke="#a9a9a9" stroke-width="0.6"/><path d="M30.9,41.0 H34.4" stroke="#a9a9a9" stroke-width="0.6"/><path d="M35.1,41.0 H37.4" stroke="#a9a9a9" stroke-width="0.6"/><path d="M38.1,41.0 H40.0" stroke="#a9a9a9" stroke-width="0.6"/><path d="M5.0,43.5 H9.5" stroke="#a9a9a9" stroke-width="0.6"/><path d="M9.9,43.5 H14.7" stroke="#a9a9a9" stroke-width="0.6"/><path d="M15.1,43.5 H19.3" stroke="#a9a9a9" stroke-width="0.6"/><path d="M20.2,43.5 H25.1" stroke="#a9a9a9" stroke-width="0.6"/><path d="M26.0,43.5 H29.2" stroke="#a9a9a9" stroke-width="0.6"/><path d="M29.9,43.5 H33.5" stroke="#a9a9a9" stroke-width="0.6"/><path d="M33.9,43.5 H37.1" stroke="#a9a9a9" stroke-width="0.6"/><path d="M37.6,43.5 H39.0" stroke="#a9a9a9" stroke-width="0.6"/><path d="M5.0,44.8 H9.2" stroke="#777" stroke-width="0.6"/><path d="M10.1,44.8 H14.6" stroke="#777" stroke-width="0.6"/><path d="M15.4,44.8 H20.2" stroke="#777" stroke-width="0.6"/><path d="M20.7,44.8 H24.2" stroke="#777" stroke-width="0.6"/><path d="M24.7,44.8 H28.2" stroke="#777" stroke-width="0.6"/><path d="M29.0,44.8 H31.5" stroke="#777" stroke-width="0.6"/><path d="M32.4,44.8 H35.4" stroke="#777" stroke-width="0.6"/><path d="M35.9,44.8 H38.1" stroke="#777" stroke-width="0.6"/><path d="M38.8,44.8 H40.0" stroke="#777" stroke-width="0.6"/><path d="M5.0,46.0 H8.9" stroke="#a9a9a9" stroke-width="0.6"/><path d="M9.5,46.0 H11.3" stroke="#a9a9a9" stroke-width="0.6"/><path d="M12.1,46.0 H14.3" stroke="#a9a9a9" stroke-width="0.6"/><path d="M14.8,46.0 H18.4" stroke="#a9a9a9" stroke-width="0.6"/><path d="M19.2,46.0 H20.8" stroke="#a9a9a9" stroke-width="0.6"/><path d="M21.7,46.0 H23.3" stroke="#a9a9a9" stroke-width="0.6"/><path d="M23.8,46.0 H26.5" stroke="#a9a9a9" stroke-width="0.6"/><path d="M27.3,46.0 H31.4" stroke="#a9a9a9" stroke-width="0.6"/><path d="M32.3,46.0 H35.3" stroke="#a9a9a9" stroke-width="0.6"/><path d="M36.2,46.0 H38.2" stroke="#a9a9a9" stroke-width="0.6"/><path d="M39.2,46.0 H40.0" stroke="#a9a9a9" stroke-width="0.6"/><path d="M5.0,47.3 H7.5" stroke="#a9a9a9" stroke-width="0.6"/><path d="M8.4,47.3 H11.6" stroke="#a9a9a9" stroke-width="0.6"/><path d="M12.0,47.3 H14.6" stroke="#a9a9a9" stroke-width="0.6"/><path d="M15.1,47.3 H17.4" stroke="#a9a9a9" stroke-width="0.6"/><path d="M18.0,47.3 H22.3" stroke="#a9a9a9" stroke-width="0.6"/><path d="M23.0,47.3 H25.0" stroke="#a9a9a9" stroke-width="0.6"/><path d="M5.0,48.5 H7.2" stroke="#a9a9a9" stroke-width="0.6"/><path d="M8.1,48.5 H13.0" stroke="#a9a9a9" stroke-width="0.6"/><path d="M13.5,48.5 H17.5" stroke="#a9a9a9" stroke-width="0.6"/><path d="M18.1,48.5 H19.9" stroke="#a9a9a9" stroke-width="0.6"/><path d="M20.9,48.5 H23.9" stroke="#a9a9a9" stroke-width="0.6"/><path d="M24.5,48.5 H28.0" stroke="#a9a9a9" stroke-width="0.6"/><path d="M28.4,48.5 H31.4" stroke="#a9a9a9" stroke-width="0.6"/><path d="M32.2,48.5 H36.7" stroke="#a9a9a9" stroke-width="0.6"/><path d="M37.2,48.5 H40.0" stroke="#a9a9a9" stroke-width="0.6"/><path d="M5.0,49.8 H8.9" stroke="#a9a9a9" stroke-width="0.6"/><path d="M9.9,49.8 H12.6" stroke="#a9a9a9" stroke-width="0.6"/><path d="M13.1,49.8 H16.7" stroke="#a9a9a9" stroke-width="0.6"/><path d="M17.3,49.8 H19.1" stroke="#a9a9a9" stroke-width="0.6"/><path d="M19.7,49.8 H22.6" stroke="#a9a9a9" stroke-width="0.6"/><path d="M23.4,49.8 H26.3" stroke="#a9a9a9" stroke-width="0.6"/><path d="M26.7,49.8 H30.2" stroke="#a9a9a9" stroke-width="0.6"/><path d="M30.9,49.8 H33.3" stroke="#a9a9a9" stroke-width="0.6"/><path d="M34.2,49.8 H37.0" stroke="#a9a9a9" stroke-width="0.6"/><path d="M37.7,49.8 H41.0" stroke="#a9a9a9" stroke-width="0.6"/><path d="M5.0,52.3 H8.7" stroke="#a9a9a9" stroke-width="0.6"/><path d="M9.3,52.3 H12.8" stroke="#a9a9a9" stroke-width="0.6"/><path d="M13.5,52.3 H16.8" stroke="#a9a9a9" stroke-width="0.6"/><path d="M17.8,52.3 H19.6" stroke="#a9a9a9" stroke-width="0.6"/><path d="M20.2,52.3 H24.8" stroke="#a9a9a9" stroke-width="0.6"/><path d="M5.0,53.6 H9.0" stroke="#a9a9a9" stroke-width="0.6"/><path d="M9.5,53.6 H14.0" stroke="#a9a9a9" stroke-width="0.6"/><path d="M14.6,53.6 H17.8" stroke="#a9a9a9" stroke-width="0.6"/><path d="M18.5,53.6 H20.7" stroke="#a9a9a9" stroke-width="0.6"/><path d="M21.5,53.6 H26.0" stroke="#a9a9a9" stroke-width="0.6"/><path d="M26.7,53.6 H29.7" stroke="#a9a9a9" stroke-width="0.6"/><path d="M30.3,53.6 H32.5" stroke="#a9a9a9" stroke-width="0.6"/><path d="M5.0,54.8 H7.5" stroke="#a9a9a9" stroke-width="0.6"/><path d="M8.1,54.8 H12.6" stroke="#a9a9a9" stroke-width="0.6"/><path d="M13.2,54.8 H15.3" stroke="#a9a9a9" stroke-width="0.6"/><path d="M15.9,54.8 H17.7" stroke="#a9a9a9" stroke-width="0.6"/><path d="M18.2,54.8 H20.5" stroke="#a9a9a9" stroke-width="0.6"/><path d="M21.3,54.8 H26.1" stroke="#a9a9a9" stroke-width="0.6"/><path d="M26.6,54.8 H29.1" stroke="#a9a9a9" stroke-width="0.6"/><path d="M29.9,54.8 H31.5" stroke="#a9a9a9" stroke-width="0.6"/><path d="M32.0,54.8 H35.5" stroke="#a9a9a9" stroke-width="0.6"/><path d="M36.1,54.8 H38.9" stroke="#a9a9a9" stroke-width="0.6"/><path d="M39.5,54.8 H40.0" stroke="#a9a9a9" stroke-width="0.6"/><path d="M5.0,56.1 H9.5" stroke="#777" stroke-width="0.6"/><path d="M9.9,56.1 H11.7" stroke="#777" stroke-width="0.6"/><path d="M12.3,56.1 H17.3" stroke="#777" stroke-width="0.6"/><path d="M17.9,56.1 H22.0" stroke="#777" stroke-width="0.6"/><path d="M22.6,56.1 H26.5" stroke="#777" stroke-width="0.6"/><path d="M27.0,56.1 H31.2" stroke="#777" stroke-width="0.6"/><path d="M32.0,56.1 H33.9" stroke="#777" stroke-width="0.6"/><path d="M34.6,56.1 H39.3" stroke="#777" stroke-width="0.6"/><path d="M5.0,58.6 H8.5" stroke="#777" stroke-width="0.6"/><path d="M9.0,58.6 H13.7" stroke="#777" stroke-width="0.6"/><path d="M14.4,58.6 H18.0" stroke="#777" stroke-width="0.6"/><path d="M18.7,58.6 H23.2" stroke="#777" stroke-width="0.6"/><path d="M24.0,58.6 H27.1" stroke="#777" stroke-width="0.6"/><path d="M27.7,58.6 H31.9" stroke="#777" stroke-width="0.6"/><path d="M32.8,58.6 H36.4" stroke="#777" stroke-width="0.6"/><path d="M37.3,58.6 H40.0" stroke="#777" stroke-width="0.6"/><path d="M5.0,59.9 H7.6" stroke="#a9a9a9" stroke-width="0.6"/><path d="M8.4,59.9 H10.0" stroke="#a9a9a9" stroke-width="0.6"/><path d="M10.7,59.9 H15.1" stroke="#a9a9a9" stroke-width="0.6"/><path d="M16.0,59.9 H19.4" stroke="#a9a9a9" stroke-width="0.6"/><path d="M20.3,59.9 H24.7" stroke="#a9a9a9" stroke-width="0.6"/><path d="M25.3,59.9 H28.9" stroke="#a9a9a9" stroke-width="0.6"/><path d="M29.5,59.9 H32.9" stroke="#a9a9a9" stroke-width="0.6"/><path d="M33.9,59.9 H38.0" stroke="#a9a9a9" stroke-width="0.6"/><path d="M38.7,59.9 H41.0" stroke="#a9a9a9" stroke-width="0.6"/><path d="M5.0,62.4 H9.7" stroke="#777" stroke-width="0.6"/><path d="M10.2,62.4 H13.1" stroke="#777" stroke-width="0.6"/><path d="M13.9,62.4 H16.4" stroke="#777" stroke-width="0.6"/><path d="M17.0,62.4 H21.2" stroke="#777" stroke-width="0.6"/><path d="M21.8,62.4 H25.2" stroke="#777" stroke-width="0.6"/><path d="M25.6,62.4 H28.7" stroke="#777" stroke-width="0.6"/><path d="M29.7,62.4 H31.2" stroke="#777" stroke-width="0.6"/><path d="M31.7,62.4 H36.3" stroke="#777" stroke-width="0.6"/><path d="M37.3,62.4 H40.5" stroke="#777" stroke-width="0.6"/><path d="M5.0,63.7 H8.9" stroke="#777" stroke-width="0.6"/><path d="M9.9,63.7 H12.9" stroke="#777" stroke-width="0.6"/><path d="M13.5,63.7 H15.8" stroke="#777" stroke-width="0.6"/><path d="M16.2,63.7 H17.8" stroke="#777" stroke-width="0.6"/><path d="M18.3,63.7 H22.1" stroke="#777" stroke-width="0.6"/><path d="M22.7,63.7 H24.9" stroke="#777" stroke-width="0.6"/><path d="M5.0,66.2 H6.6" stroke="#a9a9a9" stroke-width="0.6"/><path d="M7.6,66.2 H10.1" stroke="#a9a9a9" stroke-width="0.6"/><path d="M10.9,66.2 H14.5" stroke="#a9a9a9" stroke-width="0.6"/><path d="M15.2,66.2 H17.4" stroke="#a9a9a9" stroke-width="0.6"/><path d="M18.1,66.2 H20.8" stroke="#a9a9a9" stroke-width="0.6"/><path d="M21.2,66.2 H23.3" stroke="#a9a9a9" stroke-width="0.6"/><path d="M23.8,66.2 H28.4" stroke="#a9a9a9" stroke-width="0.6"/><path d="M28.9,66.2 H33.0" stroke="#a9a9a9" stroke-width="0.6"/><path d="M5.0,67.5 H6.7" stroke="#a9a9a9" stroke-width="0.6"/><path d="M7.1,67.5 H11.0" stroke="#a9a9a9" stroke-width="0.6"/><path d="M11.4,67.5 H13.8" stroke="#a9a9a9" stroke-width="0.6"/><path d="M14.5,67.5 H17.7" stroke="#a9a9a9" stroke-width="0.6"/><path d="M18.6,67.5 H22.3" stroke="#a9a9a9" stroke-width="0.6"/><path d="M22.9,67.5 H26.0" stroke="#a9a9a9" stroke-width="0.6"/><path d="M26.8,67.5 H31.0" stroke="#a9a9a9" stroke-width="0.6"/><path d="M31.5,67.5 H36.1" stroke="#a9a9a9" stroke-width="0.6"/><path d="M36.7,67.5 H39.0" stroke="#a9a9a9" stroke-width="0.6"/><path d="M5.0,68.7 H7.3" stroke="#a9a9a9" stroke-width="0.6"/><path d="M7.8,68.7 H10.9" stroke="#a9a9a9" stroke-width="0.6"/><path d="M11.9,68.7 H16.4" stroke="#a9a9a9" stroke-width="0.6"/><path d="M16.9,68.7 H20.6" stroke="#a9a9a9" stroke-width="0.6"/><path d="M21.1,68.7 H23.7" stroke="#a9a9a9" stroke-width="0.6"/><path d="M24.7,68.7 H27.4" stroke="#a9a9a9" stroke-width="0.6"/><path d="M27.8,68.7 H31.3" stroke="#a9a9a9" stroke-width="0.6"/><path d="M32.1,68.7 H33.0" stroke="#a9a9a9" stroke-width="0.6"/><path d="M5.0,70.0 H6.5" stroke="#a9a9a9" stroke-width="0.6"/><path d="M7.2,70.0 H10.2" stroke="#a9a9a9" stroke-width="0.6"/><path d="M10.8,70.0 H12.8" stroke="#a9a9a9" stroke-width="0.6"/><path d="M13.5,70.0 H15.2" stroke="#a9a9a9" stroke-width="0.6"/><path d="M15.6,70.0 H18.5" stroke="#a9a9a9" stroke-width="0.6"/><path d="M19.1,70.0 H23.5" stroke="#a9a9a9" stroke-width="0.6"/><path d="M24.0,70.0 H25.9" stroke="#a9a9a9" stroke-width="0.6"/><path d="M26.7,70.0 H29.9" stroke="#a9a9a9" stroke-width="0.6"/><path d="M30.4,70.0 H32.3" stroke="#a9a9a9" stroke-width="0.6"/><path d="M33.3,70.0 H35.3" stroke="#a9a9a9" stroke-width="0.6"/><path d="M36.1,70.0 H40.0" stroke="#a9a9a9" stroke-width="0.6"/><path d="M40.6,70.0 H41.0" stroke="#a9a9a9" stroke-width="0.6"/><path d="M5.0,71.2 H7.3" stroke="#a9a9a9" stroke-width="0.6"/><path d="M7.9,71.2 H11.9" stroke="#a9a9a9" stroke-width="0.6"/><path d="M12.5,71.2 H15.5" stroke="#a9a9a9" stroke-width="0.6"/><path d="M16.3,71.2 H18.9" stroke="#a9a9a9" stroke-width="0.6"/><path d="M19.7,71.2 H21.4" stroke="#a9a9a9" stroke-width="0.6"/><path d="M22.0,71.2 H25.8" stroke="#a9a9a9" stroke-width="0.6"/><path d="M26.7,71.2 H30.0" stroke="#a9a9a9" stroke-width="0.6"/><path d="M30.8,71.2 H34.6" stroke="#a9a9a9" stroke-width="0.6"/><path d="M35.4,71.2 H38.5" stroke="#a9a9a9" stroke-width="0.6"/><path d="M39.1,71.2 H40.0" stroke="#a9a9a9" stroke-width="0.6"/><path d="M5.0,72.5 H7.2" stroke="#a9a9a9" stroke-width="0.6"/><path d="M7.8,72.5 H10.5" stroke="#a9a9a9" stroke-width="0.6"/><path d="M11.1,72.5 H15.7" stroke="#a9a9a9" stroke-width="0.6"/><path d="M16.1,72.5 H19.2" stroke="#a9a9a9" stroke-width="0.6"/><path d="M20.1,72.5 H24.9" stroke="#a9a9a9" stroke-width="0.6"/><path d="M5.0,73.7 H9.6" stroke="#a9a9a9" stroke-width="0.6"/><path d="M10.6,73.7 H12.2" stroke="#a9a9a9" stroke-width="0.6"/><path d="M13.2,73.7 H15.0" stroke="#a9a9a9" stroke-width="0.6"/><path d="M15.8,73.7 H19.0" stroke="#a9a9a9" stroke-width="0.6"/><path d="M20.0,73.7 H22.3" stroke="#a9a9a9" stroke-width="0.6"/><path d="M22.8,73.7 H27.6" stroke="#a9a9a9" stroke-width="0.6"/><path d="M28.3,73.7 H31.4" stroke="#a9a9a9" stroke-width="0.6"/><path d="M32.0,73.7 H34.5" stroke="#a9a9a9" stroke-width="0.6"/><path d="M34.9,73.7 H38.4" stroke="#a9a9a9" stroke-width="0.6"/><path d="M38.9,73.7 H40.0" stroke="#a9a9a9" stroke-width="0.6"/><path d="M5.0,75.0 H9.8" stroke="#a9a9a9" stroke-width="0.6"/><path d="M10.7,75.0 H13.2" stroke="#a9a9a9" stroke-width="0.6"/><path d="M13.9,75.0 H18.3" stroke="#a9a9a9" stroke-width="0.6"/><path d="M19.1,75.0 H23.4" stroke="#a9a9a9" stroke-width="0.6"/><path d="M24.1,75.0 H26.0" stroke="#a9a9a9" stroke-width="0.6"/><path d="M26.9,75.0 H31.0" stroke="#a9a9a9" stroke-width="0.6"/><path d="M31.9,75.0 H34.3" stroke="#a9a9a9" stroke-width="0.6"/><path d="M35.1,75.0 H38.4" stroke="#a9a9a9" stroke-width="0.6"/><path d="M38.9,75.0 H41.0" stroke="#a9a9a9" stroke-width="0.6"/><path d="M5.0,76.2 H9.4" stroke="#a9a9a9" stroke-width="0.6"/><path d="M10.0,76.2 H13.8" stroke="#a9a9a9" stroke-width="0.6"/><path d="M14.3,76.2 H18.9" stroke="#a9a9a9" stroke-width="0.6"/><path d="M19.3,76.2 H23.6" stroke="#a9a9a9" stroke-width="0.6"/><path d="M24.3,76.2 H29.0" stroke="#a9a9a9" stroke-width="0.6"/><path d="M30.0,76.2 H31.5" stroke="#a9a9a9" stroke-width="0.6"/><path d="M31.9,76.2 H34.3" stroke="#a9a9a9" stroke-width="0.6"/><path d="M34.7,76.2 H39.3" stroke="#a9a9a9" stroke-width="0.6"/><path d="M39.7,76.2 H41.0" stroke="#a9a9a9" stroke-width="0.6"/><path d="M5.0,77.5 H7.9" stroke="#a9a9a9" stroke-width="0.6"/><path d="M8.8,77.5 H11.1" stroke="#a9a9a9" stroke-width="0.6"/><path d="M11.8,77.5 H14.8" stroke="#a9a9a9" stroke-width="0.6"/><path d="M15.5,77.5 H18.1" stroke="#a9a9a9" stroke-width="0.6"/><path d="M19.0,77.5 H24.0" stroke="#a9a9a9" stroke-width="0.6"/><path d="M24.8,77.5 H25.0" stroke="#a9a9a9" stroke-width="0.6"/><path d="M5.0,78.7 H8.1" stroke="#a9a9a9" stroke-width="0.6"/><path d="M8.9,78.7 H10.6" stroke="#a9a9a9" stroke-width="0.6"/><path d="M11.1,78.7 H15.0" stroke="#a9a9a9" stroke-width="0.6"/><path d="M15.7,78.7 H18.3" stroke="#a9a9a9" stroke-width="0.6"/><path d="M18.9,78.7 H23.4" stroke="#a9a9a9" stroke-width="0.6"/><path d="M24.3,78.7 H28.5" stroke="#a9a9a9" stroke-width="0.6"/><path d="M29.3,78.7 H33.0" stroke="#a9a9a9" stroke-width="0.6"/><path d="M33.7,78.7 H35.6" stroke="#a9a9a9" stroke-width="0.6"/><path d="M36.6,78.7 H38.5" stroke="#a9a9a9" stroke-width="0.6"/><path d="M39.1,78.7 H40.0" stroke="#a9a9a9" stroke-width="0.6"/><path d="M5.0,80.0 H9.1" stroke="#a9a9a9" stroke-width="0.6"/><path d="M9.9,80.0 H12.3" stroke="#a9a9a9" stroke-width="0.6"/><path d="M12.7,80.0 H16.7" stroke="#a9a9a9" stroke-width="0.6"/><path d="M17.4,80.0 H20.0" stroke="#a9a9a9" stroke-width="0.6"/><path d="M20.8,80.0 H24.1" stroke="#a9a9a9" stroke-width="0.6"/><path d="M24.6,80.0 H27.7" stroke="#a9a9a9" stroke-width="0.6"/><path d="M28.2,80.0 H32.7" stroke="#a9a9a9" stroke-width="0.6"/><path d="M5.0,81.2 H9.3" stroke="#777" stroke-width="0.6"/><path d="M10.3,81.2 H14.5" stroke="#777" stroke-width="0.6"/><path d="M15.1,81.2 H19.9" stroke="#777" stroke-width="0.6"/><path d="M20.4,81.2 H22.6" stroke="#777" stroke-width="0.6"/><path d="M23.3,81.2 H25.3" stroke="#777" stroke-width="0.6"/><path d="M26.0,81.2 H29.4" stroke="#777" stroke-width="0.6"/><path d="M29.9,81.2 H34.1" stroke="#777" stroke-width="0.6"/><path d="M34.5,81.2 H37.7" stroke="#777" stroke-width="0.6"/><path d="M38.3,81.2 H40.0" stroke="#777" stroke-width="0.6"/><path d="M5.0,82.5 H9.4" stroke="#a9a9a9" stroke-width="0.6"/><path d="M9.9,82.5 H12.6" stroke="#a9a9a9" stroke-width="0.6"/><path d="M13.1,82.5 H15.2" stroke="#a9a9a9" stroke-width="0.6"/><path d="M16.2,82.5 H19.8" stroke="#a9a9a9" stroke-width="0.6"/><path d="M20.2,82.5 H22.5" stroke="#a9a9a9" stroke-width="0.6"/><path d="M23.2,82.5 H25.0" stroke="#a9a9a9" stroke-width="0.6"/><path d="M5.0,83.7 H6.9" stroke="#777" stroke-width="0.6"/><path d="M7.3,83.7 H12.3" stroke="#777" stroke-width="0.6"/><path d="M13.2,83.7 H15.7" stroke="#777" stroke-width="0.6"/><path d="M16.4,83.7 H18.1" stroke="#777" stroke-width="0.6"/><path d="M18.8,83.7 H20.9" stroke="#777" stroke-width="0.6"/><path d="M21.7,83.7 H23.8" stroke="#777" stroke-width="0.6"/><path d="M24.5,83.7 H27.1" stroke="#777" stroke-width="0.6"/><path d="M27.8,83.7 H32.7" stroke="#777" stroke-width="0.6"/><path d="M33.4,83.7 H38.3" stroke="#777" stroke-width="0.6"/><path d="M39.1,83.7 H40.0" stroke="#777" stroke-width="0.6"/><path d="M5.0,85.0 H9.3" stroke="#a9a9a9" stroke-width="0.6"/><path d="M9.9,85.0 H13.4" stroke="#a9a9a9" stroke-width="0.6"/><path d="M14.3,85.0 H19.0" stroke="#a9a9a9" stroke-width="0.6"/><path d="M19.6,85.0 H21.6" stroke="#a9a9a9" stroke-width="0.6"/><path d="M22.1,85.0 H25.7" stroke="#a9a9a9" stroke-width="0.6"/><path d="M26.7,85.0 H30.5" stroke="#a9a9a9" stroke-width="0.6"/><path d="M31.4,85.0 H35.7" stroke="#a9a9a9" stroke-width="0.6"/><path d="M36.4,85.0 H39.2" stroke="#a9a9a9" stroke-width="0.6"/><path d="M5.0,86.2 H8.1" stroke="#777" stroke-width="0.6"/><path d="M8.7,86.2 H10.7" stroke="#777" stroke-width="0.6"/><path d="M11.4,86.2 H14.0" stroke="#777" stroke-width="0.6"/><path d="M14.6,86.2 H17.9" stroke="#777" stroke-width="0.6"/><path d="M18.7,86.2 H22.6" stroke="#777" stroke-width="0.6"/><path d="M23.3,86.2 H27.1" stroke="#777" stroke-width="0.6"/><path d="M27.9,86.2 H32.6" stroke="#777" stroke-width="0.6"/><path d="M33.4,86.2 H37.8" stroke="#777" stroke-width="0.6"/><path d="M38.4,86.2 H41.0" stroke="#777" stroke-width="0.6"/><path d="M5.0,87.5 H6.7" stroke="#a9a9a9" stroke-width="0.6"/><path d="M7.5,87.5 H12.5" stroke="#a9a9a9" stroke-width="0.6"/><path d="M13.0,87.5 H15.1" stroke="#a9a9a9" stroke-width="0.6"/><path d="M15.9,87.5 H17.6" stroke="#a9a9a9" stroke-width="0.6"/><path d="M18.0,87.5 H22.9" stroke="#a9a9a9" stroke-width="0.6"/><path d="M23.5,87.5 H26.2" stroke="#a9a9a9" stroke-width="0.6"/><path d="M26.8,87.5 H31.4" stroke="#a9a9a9" stroke-width="0.6"/><path d="M32.4,87.5 H35.3" stroke="#a9a9a9" stroke-width="0.6"/><path d="M36.2,87.5 H38.2" stroke="#a9a9a9" stroke-width="0.6"/><path d="M39.2,87.5 H40.0" stroke="#a9a9a9" stroke-width="0.6"/><path d="M5.0,90.0 H8.1" stroke="#a9a9a9" stroke-width="0.6"/><path d="M8.8,90.0 H12.2" stroke="#a9a9a9" stroke-width="0.6"/><path d="M12.6,90.0 H14.9" stroke="#a9a9a9" stroke-width="0.6"/><path d="M15.5,90.0 H17.3" stroke="#a9a9a9" stroke-width="0.6"/><path d="M18.1,90.0 H22.8" stroke="#a9a9a9" stroke-width="0.6"/><path d="M23.6,90.0 H25.9" stroke="#a9a9a9" stroke-width="0.6"/><path d="M26.6,90.0 H28.2" stroke="#a9a9a9" stroke-width="0.6"/><path d="M28.8,90.0 H31.1" stroke="#a9a9a9" stroke-width="0.6"/><path d="M31.9,90.0 H35.4" stroke="#a9a9a9" stroke-width="0.6"/><path d="M36.2,90.0 H38.2" stroke="#a9a9a9" stroke-width="0.6"/><path d="M38.9,90.0 H40.0" stroke="#a9a9a9" stroke-width="0.6"/><path d="M5.0,91.3 H9.7" stroke="#777" stroke-width="0.6"/><path d="M10.6,91.3 H13.6" stroke="#777" stroke-width="0.6"/><path d="M14.5,91.3 H18.0" stroke="#777" stroke-width="0.6"/><path d="M18.5,91.3 H22.4" stroke="#777" stroke-width="0.6"/><path d="M23.3,91.3 H27.8" stroke="#777" stroke-width="0.6"/><path d="M28.8,91.3 H33.0" stroke="#777" stroke-width="0.6"/><path d="M33.8,91.3 H38.3" stroke="#777" stroke-width="0.6"/><path d="M38.7,91.3 H39.0" stroke="#777" stroke-width="0.6"/><path d="M5.0,92.5 H7.5" stroke="#777" stroke-width="0.6"/><path d="M8.1,92.5 H12.3" stroke="#777" stroke-width="0.6"/><path d="M13.0,92.5 H17.6" stroke="#777" stroke-width="0.6"/><path d="M18.2,92.5 H19.9" stroke="#777" stroke-width="0.6"/><path d="M20.5,92.5 H25.1" stroke="#777" stroke-width="0.6"/><path d="M25.9,92.5 H30.8" stroke="#777" stroke-width="0.6"/><path d="M31.7,92.5 H35.6" stroke="#777" stroke-width="0.6"/><path d="M36.1,92.5 H39.0" stroke="#777" stroke-width="0.6"/><path d="M39.4,92.5 H40.0" stroke="#777" stroke-width="0.6"/><path d="M5.0,93.8 H8.2" stroke="#777" stroke-width="0.6"/><path d="M8.9,93.8 H11.3" stroke="#777" stroke-width="0.6"/><path d="M11.9,93.8 H16.6" stroke="#777" stroke-width="0.6"/><path d="M17.1,93.8 H20.4" stroke="#777" stroke-width="0.6"/><path d="M21.3,93.8 H23.7" stroke="#777" stroke-width="0.6"/><path d="M24.2,93.8 H28.9" stroke="#777" stroke-width="0.6"/><path d="M29.6,93.8 H33.3" stroke="#777" stroke-width="0.6"/><path d="M34.0,93.8 H38.4" stroke="#777" stroke-width="0.6"/><path d="M39.3,93.8 H40.0" stroke="#777" stroke-width="0.6"/><path d="M44.0,9.5 H48.1" stroke="#777" stroke-width="0.6"/><path d="M48.8,9.5 H53.1" stroke="#777" stroke-width="0.6"/><path d="M53.6,9.5 H55.3" stroke="#777" stroke-width="0.6"/><path d="M55.9,9.5 H59.2" stroke="#777" stroke-width="0.6"/><path d="M60.0,9.5 H63.8" stroke="#777" stroke-width="0.6"/><path d="M64.5,9.5 H67.3" stroke="#777" stroke-width="0.6"/><path d="M68.2,9.5 H71.6" stroke="#777" stroke-width="0.6"/><path d="M72.2,9.5 H75.7" stroke="#777" stroke-width="0.6"/><path d="M76.4,9.5 H77.0" stroke="#777" stroke-width="0.6"/><path d="M44.0,10.8 H47.8" stroke="#a9a9a9" stroke-width="0.6"/><path d="M48.4,10.8 H51.9" stroke="#a9a9a9" stroke-width="0.6"/><path d="M52.9,10.8 H54.8" stroke="#a9a9a9" stroke-width="0.6"/><path d="M55.4,10.8 H58.4" stroke="#a9a9a9" stroke-width="0.6"/><path d="M59.3,10.8 H61.4" stroke="#a9a9a9" stroke-width="0.6"/><path d="M62.2,10.8 H64.1" stroke="#a9a9a9" stroke-width="0.6"/><path d="M65.1,10.8 H66.9" stroke="#a9a9a9" stroke-width="0.6"/><path d="M67.7,10.8 H71.8" stroke="#a9a9a9" stroke-width="0.6"/><path d="M72.5,10.8 H75.0" stroke="#a9a9a9" stroke-width="0.6"/><path d="M75.6,10.8 H80.0" stroke="#a9a9a9" stroke-width="0.6"/><path d="M44.0,12.0 H48.3" stroke="#a9a9a9" stroke-width="0.6"/><path d="M49.1,12.0 H53.5" stroke="#a9a9a9" stroke-width="0.6"/><path d="M54.3,12.0 H56.3" stroke="#a9a9a9" stroke-width="0.6"/><path d="M56.8,12.0 H59.3" stroke="#a9a9a9" stroke-width="0.6"/><path d="M59.8,12.0 H63.4" stroke="#a9a9a9" stroke-width="0.6"/><path d="M64.0,12.0 H66.8" stroke="#a9a9a9" stroke-width="0.6"/><path d="M67.2,12.0 H72.2" stroke="#a9a9a9" stroke-width="0.6"/><path d="M72.8,12.0 H75.1" stroke="#a9a9a9" stroke-width="0.6"/><path d="M75.9,12.0 H77.7" stroke="#a9a9a9" stroke-width="0.6"/><path d="M78.2,12.0 H80.0" stroke="#a9a9a9" stroke-width="0.6"/><path d="M44.0,13.2 H48.9" stroke="#a9a9a9" stroke-width="0.6"/><path d="M49.5,13.2 H51.9" stroke="#a9a9a9" stroke-width="0.6"/><path d="M52.7,13.2 H56.7" stroke="#a9a9a9" stroke-width="0.6"/><path d="M57.5,13.2 H59.0" stroke="#a9a9a9" stroke-width="0.6"/><path d="M59.7,13.2 H63.8" stroke="#a9a9a9" stroke-width="0.6"/><path d="M64.4,13.2 H69.1" stroke="#a9a9a9" stroke-width="0.6"/><path d="M70.1,13.2 H72.2" stroke="#a9a9a9" stroke-width="0.6"/><path d="M72.7,13.2 H76.4" stroke="#a9a9a9" stroke-width="0.6"/><path d="M77.0,13.2 H78.9" stroke="#a9a9a9" stroke-width="0.6"/><path d="M79.3,13.2 H80.0" stroke="#a9a9a9" stroke-width="0.6"/><path d="M44.0,14.5 H47.8" stroke="#a9a9a9" stroke-width="0.6"/><path d="M48.3,14.5 H51.4" stroke="#a9a9a9" stroke-width="0.6"/><path d="M52.1,14.5 H55.9" stroke="#a9a9a9" stroke-width="0.6"/><path d="M56.6,14.5 H60.4" stroke="#a9a9a9" stroke-width="0.6"/><path d="M61.3,14.5 H66.1" stroke="#a9a9a9" stroke-width="0.6"/><path d="M67.0,14.5 H70.9" stroke="#a9a9a9" stroke-width="0.6"/><path d="M71.9,14.5 H74.9" stroke="#a9a9a9" stroke-width="0.6"/><path d="M75.3,14.5 H79.0" stroke="#a9a9a9" stroke-width="0.6"/><path d="M44.0,15.8 H46.0" stroke="#a9a9a9" stroke-width="0.6"/><path d="M46.9,15.8 H48.4" stroke="#a9a9a9" stroke-width="0.6"/><path d="M48.9,15.8 H52.8" stroke="#a9a9a9" stroke-width="0.6"/><path d="M53.3,15.8 H57.3" stroke="#a9a9a9" stroke-width="0.6"/><path d="M57.7,15.8 H60.3" stroke="#a9a9a9" stroke-width="0.6"/><path d="M60.9,15.8 H64.6" stroke="#a9a9a9" stroke-width="0.6"/><path d="M65.4,15.8 H69.3" stroke="#a9a9a9" stroke-width="0.6"/><path d="M69.8,15.8 H74.3" stroke="#a9a9a9" stroke-width="0.6"/><path d="M74.7,15.8 H77.8" stroke="#a9a9a9" stroke-width="0.6"/><path d="M78.2,15.8 H79.0" stroke="#a9a9a9" stroke-width="0.6"/><path d="M44.0,17.0 H47.8" stroke="#a9a9a9" stroke-width="0.6"/><path d="M48.6,17.0 H50.4" stroke="#a9a9a9" stroke-width="0.6"/><path d="M51.2,17.0 H53.9" stroke="#a9a9a9" stroke-width="0.6"/><path d="M54.8,17.0 H58.9" stroke="#a9a9a9" stroke-width="0.6"/><path d="M59.5,17.0 H62.4" stroke="#a9a9a9" stroke-width="0.6"/><path d="M63.0,17.0 H64.9" stroke="#a9a9a9" stroke-width="0.6"/><path d="M65.6,17.0 H69.0" stroke="#a9a9a9" stroke-width="0.6"/><path d="M44.0,18.2 H45.6" stroke="#777" stroke-width="0.6"/><path d="M46.5,18.2 H50.5" stroke="#777" stroke-width="0.6"/><path d="M51.1,18.2 H55.4" stroke="#777" stroke-width="0.6"/><path d="M56.1,18.2 H60.5" stroke="#777" stroke-width="0.6"/><path d="M61.1,18.2 H66.0" stroke="#777" stroke-width="0.6"/><path d="M66.8,18.2 H68.6" stroke="#777" stroke-width="0.6"/><path d="M44.0,19.5 H46.5" stroke="#777" stroke-width="0.6"/><path d="M47.3,19.5 H51.8" stroke="#777" stroke-width="0.6"/><path d="M52.4,19.5 H56.0" stroke="#777" stroke-width="0.6"/><path d="M56.5,19.5 H61.3" stroke="#777" stroke-width="0.6"/><path d="M62.0,19.5 H65.1" stroke="#777" stroke-width="0.6"/><path d="M66.0,19.5 H68.5" stroke="#777" stroke-width="0.6"/><path d="M69.2,19.5 H72.1" stroke="#777" stroke-width="0.6"/><path d="M73.1,19.5 H76.3" stroke="#777" stroke-width="0.6"/><path d="M77.3,19.5 H79.0" stroke="#777" stroke-width="0.6"/><path d="M44.0,20.8 H45.8" stroke="#a9a9a9" stroke-width="0.6"/><path d="M46.3,20.8 H50.6" stroke="#a9a9a9" stroke-width="0.6"/><path d="M51.4,20.8 H55.3" stroke="#a9a9a9" stroke-width="0.6"/><path d="M55.8,20.8 H59.7" stroke="#a9a9a9" stroke-width="0.6"/><path d="M60.5,20.8 H63.1" stroke="#a9a9a9" stroke-width="0.6"/><path d="M63.7,20.8 H67.7" stroke="#a9a9a9" stroke-width="0.6"/><path d="M68.5,20.8 H72.1" stroke="#a9a9a9" stroke-width="0.6"/><path d="M72.7,20.8 H74.2" stroke="#a9a9a9" stroke-width="0.6"/><path d="M75.1,20.8 H77.0" stroke="#a9a9a9" stroke-width="0.6"/><path d="M44.0,22.0 H47.9" stroke="#777" stroke-width="0.6"/><path d="M48.5,22.0 H52.1" stroke="#777" stroke-width="0.6"/><path d="M53.1,22.0 H57.0" stroke="#777" stroke-width="0.6"/><path d="M57.5,22.0 H62.4" stroke="#777" stroke-width="0.6"/><path d="M63.3,22.0 H65.8" stroke="#777" stroke-width="0.6"/><path d="M66.5,22.0 H69.2" stroke="#777" stroke-width="0.6"/><path d="M69.9,22.0 H74.3" stroke="#777" stroke-width="0.6"/><path d="M74.9,22.0 H79.0" stroke="#777" stroke-width="0.6"/><path d="M44.0,23.2 H48.2" stroke="#777" stroke-width="0.6"/><path d="M48.9,23.2 H51.1" stroke="#777" stroke-width="0.6"/><path d="M52.0,23.2 H53.6" stroke="#777" stroke-width="0.6"/><path d="M54.4,23.2 H56.7" stroke="#777" stroke-width="0.6"/><path d="M57.5,23.2 H59.7" stroke="#777" stroke-width="0.6"/><path d="M60.3,23.2 H62.2" stroke="#777" stroke-width="0.6"/><path d="M62.7,23.2 H67.2" stroke="#777" stroke-width="0.6"/><path d="M68.0,23.2 H71.8" stroke="#777" stroke-width="0.6"/><path d="M72.5,23.2 H77.1" stroke="#777" stroke-width="0.6"/><path d="M77.8,23.2 H79.0" stroke="#777" stroke-width="0.6"/><path d="M44.0,24.5 H45.7" stroke="#a9a9a9" stroke-width="0.6"/><path d="M46.4,24.5 H48.6" stroke="#a9a9a9" stroke-width="0.6"/><path d="M49.6,24.5 H52.6" stroke="#a9a9a9" stroke-width="0.6"/><path d="M53.5,24.5 H56.5" stroke="#a9a9a9" stroke-width="0.6"/><path d="M57.0,24.5 H59.2" stroke="#a9a9a9" stroke-width="0.6"/><path d="M60.0,24.5 H61.9" stroke="#a9a9a9" stroke-width="0.6"/><path d="M62.6,24.5 H65.9" stroke="#a9a9a9" stroke-width="0.6"/><path d="M66.9,24.5 H69.0" stroke="#a9a9a9" stroke-width="0.6"/><path d="M44.0,25.8 H46.7" stroke="#a9a9a9" stroke-width="0.6"/><path d="M47.7,25.8 H50.0" stroke="#a9a9a9" stroke-width="0.6"/><path d="M50.5,25.8 H52.8" stroke="#a9a9a9" stroke-width="0.6"/><path d="M53.7,25.8 H56.9" stroke="#a9a9a9" stroke-width="0.6"/><path d="M57.4,25.8 H59.1" stroke="#a9a9a9" stroke-width="0.6"/><path d="M59.6,25.8 H61.2" stroke="#a9a9a9" stroke-width="0.6"/><path d="M62.0,25.8 H63.7" stroke="#a9a9a9" stroke-width="0.6"/><path d="M64.6,25.8 H66.8" stroke="#a9a9a9" stroke-width="0.6"/><path d="M67.5,25.8 H70.2" stroke="#a9a9a9" stroke-width="0.6"/><path d="M70.8,25.8 H75.7" stroke="#a9a9a9" stroke-width="0.6"/><path d="M76.5,25.8 H77.0" stroke="#a9a9a9" stroke-width="0.6"/><path d="M44.0,27.0 H49.0" stroke="#a9a9a9" stroke-width="0.6"/><path d="M49.8,27.0 H54.6" stroke="#a9a9a9" stroke-width="0.6"/><path d="M55.3,27.0 H58.9" stroke="#a9a9a9" stroke-width="0.6"/><path d="M59.5,27.0 H63.6" stroke="#a9a9a9" stroke-width="0.6"/><path d="M64.4,27.0 H67.0" stroke="#a9a9a9" stroke-width="0.6"/><path d="M67.4,27.0 H71.3" stroke="#a9a9a9" stroke-width="0.6"/><path d="M71.8,27.0 H76.0" stroke="#a9a9a9" stroke-width="0.6"/><path d="M76.8,27.0 H80.0" stroke="#a9a9a9" stroke-width="0.6"/><path d="M44.0,28.2 H46.7" stroke="#777" stroke-width="0.6"/><path d="M47.3,28.2 H51.2" stroke="#777" stroke-width="0.6"/><path d="M51.9,28.2 H56.6" stroke="#777" stroke-width="0.6"/><path d="M57.2,28.2 H61.6" stroke="#777" stroke-width="0.6"/><path d="M62.5,28.2 H64.4" stroke="#777" stroke-width="0.6"/><path d="M65.4,28.2 H69.3" stroke="#777" stroke-width="0.6"/><path d="M70.3,28.2 H73.6" stroke="#777" stroke-width="0.6"/><path d="M74.6,28.2 H77.9" stroke="#777" stroke-width="0.6"/><path d="M78.9,28.2 H80.0" stroke="#777" stroke-width="0.6"/><path d="M44.0,29.5 H45.9" stroke="#777" stroke-width="0.6"/><path d="M46.7,29.5 H48.8" stroke="#777" stroke-width="0.6"/><path d="M49.6,29.5 H53.7" stroke="#777" stroke-width="0.6"/><path d="M54.1,29.5 H58.2" stroke="#777" stroke-width="0.6"/><path d="M58.6,29.5 H62.4" stroke="#777" stroke-width="0.6"/><path d="M63.2,29.5 H64.7" stroke="#777" stroke-width="0.6"/><path d="M65.6,29.5 H68.5" stroke="#777" stroke-width="0.6"/><path d="M69.5,29.5 H72.1" stroke="#777" stroke-width="0.6"/><path d="M72.7,29.5 H77.1" stroke="#777" stroke-width="0.6"/><path d="M77.6,29.5 H80.0" stroke="#777" stroke-width="0.6"/><path d="M44.0,33.3 H47.8" stroke="#a9a9a9" stroke-width="0.6"/><path d="M48.8,33.3 H50.9" stroke="#a9a9a9" stroke-width="0.6"/><path d="M51.6,33.3 H54.2" stroke="#a9a9a9" stroke-width="0.6"/><path d="M54.9,33.3 H59.5" stroke="#a9a9a9" stroke-width="0.6"/><path d="M60.2,33.3 H62.1" stroke="#a9a9a9" stroke-width="0.6"/><path d="M62.8,33.3 H66.4" stroke="#a9a9a9" stroke-width="0.6"/><path d="M66.9,33.3 H71.3" stroke="#a9a9a9" stroke-width="0.6"/><path d="M71.8,33.3 H75.0" stroke="#a9a9a9" stroke-width="0.6"/><path d="M75.7,33.3 H77.3" stroke="#a9a9a9" stroke-width="0.6"/><path d="M78.3,33.3 H80.0" stroke="#a9a9a9" stroke-width="0.6"/><path d="M44.0,34.6 H48.8" stroke="#a9a9a9" stroke-width="0.6"/><path d="M49.3,34.6 H51.3" stroke="#a9a9a9" stroke-width="0.6"/><path d="M52.0,34.6 H56.7" stroke="#a9a9a9" stroke-width="0.6"/><path d="M57.5,34.6 H60.6" stroke="#a9a9a9" stroke-width="0.6"/><path d="M61.4,34.6 H63.0" stroke="#a9a9a9" stroke-width="0.6"/><path d="M63.6,34.6 H66.6" stroke="#a9a9a9" stroke-width="0.6"/><path d="M67.5,34.6 H69.0" stroke="#a9a9a9" stroke-width="0.6"/><path d="M44.0,35.8 H47.0" stroke="#a9a9a9" stroke-width="0.6"/><path d="M47.8,35.8 H50.9" stroke="#a9a9a9" stroke-width="0.6"/><path d="M51.5,35.8 H55.2" stroke="#a9a9a9" stroke-width="0.6"/><path d="M56.2,35.8 H59.7" stroke="#a9a9a9" stroke-width="0.6"/><path d="M60.6,35.8 H63.5" stroke="#a9a9a9" stroke-width="0.6"/><path d="M64.5,35.8 H69.0" stroke="#a9a9a9" stroke-width="0.6"/><path d="M44.0,38.4 H47.8" stroke="#a9a9a9" stroke-width="0.6"/><path d="M48.3,38.4 H52.2" stroke="#a9a9a9" stroke-width="0.6"/><path d="M52.8,38.4 H57.0" stroke="#a9a9a9" stroke-width="0.6"/><path d="M57.5,38.4 H60.1" stroke="#a9a9a9" stroke-width="0.6"/><path d="M60.6,38.4 H62.1" stroke="#a9a9a9" stroke-width="0.6"/><path d="M63.0,38.4 H65.3" stroke="#a9a9a9" stroke-width="0.6"/><path d="M66.0,38.4 H68.9" stroke="#a9a9a9" stroke-width="0.6"/><path d="M44.0,40.9 H46.7" stroke="#a9a9a9" stroke-width="0.6"/><path d="M47.6,40.9 H51.2" stroke="#a9a9a9" stroke-width="0.6"/><path d="M51.8,40.9 H54.5" stroke="#a9a9a9" stroke-width="0.6"/><path d="M55.5,40.9 H58.6" stroke="#a9a9a9" stroke-width="0.6"/><path d="M59.2,40.9 H63.0" stroke="#a9a9a9" stroke-width="0.6"/><path d="M63.8,40.9 H67.8" stroke="#a9a9a9" stroke-width="0.6"/><path d="M68.3,40.9 H69.0" stroke="#a9a9a9" stroke-width="0.6"/><path d="M44.0,43.5 H47.1" stroke="#a9a9a9" stroke-width="0.6"/><path d="M48.1,43.5 H50.0" stroke="#a9a9a9" stroke-width="0.6"/><path d="M50.9,43.5 H54.1" stroke="#a9a9a9" stroke-width="0.6"/><path d="M54.8,43.5 H58.8" stroke="#a9a9a9" stroke-width="0.6"/><path d="M59.5,43.5 H62.0" stroke="#a9a9a9" stroke-width="0.6"/><path d="M44.0,44.7 H46.0" stroke="#a9a9a9" stroke-width="0.6"/><path d="M46.9,44.7 H48.5" stroke="#a9a9a9" stroke-width="0.6"/><path d="M49.1,44.7 H54.1" stroke="#a9a9a9" stroke-width="0.6"/><path d="M54.6,44.7 H58.5" stroke="#a9a9a9" stroke-width="0.6"/><path d="M59.3,44.7 H62.1" stroke="#a9a9a9" stroke-width="0.6"/><path d="M62.8,44.7 H64.9" stroke="#a9a9a9" stroke-width="0.6"/><path d="M65.8,44.7 H70.3" stroke="#a9a9a9" stroke-width="0.6"/><path d="M71.1,44.7 H72.7" stroke="#a9a9a9" stroke-width="0.6"/><path d="M73.3,44.7 H75.4" stroke="#a9a9a9" stroke-width="0.6"/><path d="M76.4,44.7 H77.9" stroke="#a9a9a9" stroke-width="0.6"/><path d="M78.8,44.7 H79.0" stroke="#a9a9a9" stroke-width="0.6"/><path d="M44.0,46.0 H47.0" stroke="#a9a9a9" stroke-width="0.6"/><path d="M47.9,46.0 H50.9" stroke="#a9a9a9" stroke-width="0.6"/><path d="M51.4,46.0 H55.1" stroke="#a9a9a9" stroke-width="0.6"/><path d="M55.7,46.0 H60.2" stroke="#a9a9a9" stroke-width="0.6"/><path d="M61.1,46.0 H62.9" stroke="#a9a9a9" stroke-width="0.6"/><path d="M63.8,46.0 H66.0" stroke="#a9a9a9" stroke-width="0.6"/><path d="M66.5,46.0 H69.0" stroke="#a9a9a9" stroke-width="0.6"/><path d="M44.0,47.2 H46.4" stroke="#a9a9a9" stroke-width="0.6"/><path d="M47.1,47.2 H50.9" stroke="#a9a9a9" stroke-width="0.6"/><path d="M51.4,47.2 H54.0" stroke="#a9a9a9" stroke-width="0.6"/><path d="M54.9,47.2 H58.6" stroke="#a9a9a9" stroke-width="0.6"/><path d="M59.1,47.2 H61.1" stroke="#a9a9a9" stroke-width="0.6"/><path d="M62.0,47.2 H64.0" stroke="#a9a9a9" stroke-width="0.6"/><path d="M64.9,47.2 H69.0" stroke="#a9a9a9" stroke-width="0.6"/><path d="M69.6,47.2 H72.0" stroke="#a9a9a9" stroke-width="0.6"/><path d="M72.7,47.2 H74.6" stroke="#a9a9a9" stroke-width="0.6"/><path d="M75.1,47.2 H77.0" stroke="#a9a9a9" stroke-width="0.6"/><path d="M44.0,48.5 H48.1" stroke="#a9a9a9" stroke-width="0.6"/><path d="M49.0,48.5 H50.8" stroke="#a9a9a9" stroke-width="0.6"/><path d="M51.4,48.5 H54.3" stroke="#a9a9a9" stroke-width="0.6"/><path d="M55.0,48.5 H58.5" stroke="#a9a9a9" stroke-width="0.6"/><path d="M59.1,48.5 H62.0" stroke="#a9a9a9" stroke-width="0.6"/><path d="M44.0,49.7 H46.0" stroke="#777" stroke-width="0.6"/><path d="M47.0,49.7 H48.9" stroke="#777" stroke-width="0.6"/><path d="M49.3,49.7 H53.8" stroke="#777" stroke-width="0.6"/><path d="M54.5,49.7 H57.0" stroke="#777" stroke-width="0.6"/><path d="M57.5,49.7 H59.4" stroke="#777" stroke-width="0.6"/><path d="M59.9,49.7 H62.4" stroke="#777" stroke-width="0.6"/><path d="M63.0,49.7 H67.5" stroke="#777" stroke-width="0.6"/><path d="M68.2,49.7 H71.5" stroke="#777" stroke-width="0.6"/><path d="M72.4,49.7 H76.8" stroke="#777" stroke-width="0.6"/><path d="M77.3,49.7 H80.0" stroke="#777" stroke-width="0.6"/><path d="M44.0,51.0 H48.0" stroke="#a9a9a9" stroke-width="0.6"/><path d="M48.5,51.0 H52.8" stroke="#a9a9a9" stroke-width="0.6"/><path d="M53.5,51.0 H56.8" stroke="#a9a9a9" stroke-width="0.6"/><path d="M57.4,51.0 H61.5" stroke="#a9a9a9" stroke-width="0.6"/><path d="M62.4,51.0 H66.2" stroke="#a9a9a9" stroke-width="0.6"/><path d="M66.9,51.0 H69.3" stroke="#a9a9a9" stroke-width="0.6"/><path d="M70.1,51.0 H73.1" stroke="#a9a9a9" stroke-width="0.6"/><path d="M73.8,51.0 H78.7" stroke="#a9a9a9" stroke-width="0.6"/><path d="M79.4,51.0 H80.0" stroke="#a9a9a9" stroke-width="0.6"/><path d="M44.0,52.2 H46.5" stroke="#a9a9a9" stroke-width="0.6"/><path d="M47.4,52.2 H52.1" stroke="#a9a9a9" stroke-width="0.6"/><path d="M53.1,52.2 H57.0" stroke="#a9a9a9" stroke-width="0.6"/><path d="M57.8,52.2 H61.1" stroke="#a9a9a9" stroke-width="0.6"/><path d="M61.7,52.2 H64.6" stroke="#a9a9a9" stroke-width="0.6"/><path d="M65.3,52.2 H68.7" stroke="#a9a9a9" stroke-width="0.6"/><path d="M69.7,52.2 H74.6" stroke="#a9a9a9" stroke-width="0.6"/><path d="M75.0,52.2 H78.6" stroke="#a9a9a9" stroke-width="0.6"/><path d="M79.3,52.2 H80.0" stroke="#a9a9a9" stroke-width="0.6"/><path d="M44.0,53.5 H47.2" stroke="#a9a9a9" stroke-width="0.6"/><path d="M47.7,53.5 H51.0" stroke="#a9a9a9" stroke-width="0.6"/><path d="M51.8,53.5 H54.6" stroke="#a9a9a9" stroke-width="0.6"/><path d="M55.2,53.5 H59.1" stroke="#a9a9a9" stroke-width="0.6"/><path d="M60.0,53.5 H64.1" stroke="#a9a9a9" stroke-width="0.6"/><path d="M65.1,53.5 H67.8" stroke="#a9a9a9" stroke-width="0.6"/><path d="M68.6,53.5 H72.1" stroke="#a9a9a9" stroke-width="0.6"/><path d="M72.8,53.5 H75.8" stroke="#a9a9a9" stroke-width="0.6"/><path d="M76.5,53.5 H79.4" stroke="#a9a9a9" stroke-width="0.6"/><path d="M44.0,54.7 H47.6" stroke="#a9a9a9" stroke-width="0.6"/><path d="M48.3,54.7 H52.9" stroke="#a9a9a9" stroke-width="0.6"/><path d="M53.8,54.7 H58.4" stroke="#a9a9a9" stroke-width="0.6"/><path d="M58.9,54.7 H61.8" stroke="#a9a9a9" stroke-width="0.6"/><path d="M44.0,56.0 H48.3" stroke="#a9a9a9" stroke-width="0.6"/><path d="M48.8,56.0 H50.7" stroke="#a9a9a9" stroke-width="0.6"/><path d="M51.5,56.0 H54.1" stroke="#a9a9a9" stroke-width="0.6"/><path d="M54.8,56.0 H59.1" stroke="#a9a9a9" stroke-width="0.6"/><path d="M60.0,56.0 H63.7" stroke="#a9a9a9" stroke-width="0.6"/><path d="M64.6,56.0 H67.3" stroke="#a9a9a9" stroke-width="0.6"/><path d="M68.2,56.0 H72.5" stroke="#a9a9a9" stroke-width="0.6"/><path d="M73.3,56.0 H75.7" stroke="#a9a9a9" stroke-width="0.6"/><path d="M76.3,56.0 H79.0" stroke="#a9a9a9" stroke-width="0.6"/><path d="M44.0,57.2 H47.8" stroke="#a9a9a9" stroke-width="0.6"/><path d="M48.5,57.2 H51.2" stroke="#a9a9a9" stroke-width="0.6"/><path d="M51.6,57.2 H55.0" stroke="#a9a9a9" stroke-width="0.6"/><path d="M55.6,57.2 H58.9" stroke="#a9a9a9" stroke-width="0.6"/><path d="M59.7,57.2 H62.0" stroke="#a9a9a9" stroke-width="0.6"/><path d="M44.0,59.8 H46.8" stroke="#777" stroke-width="0.6"/><path d="M47.7,59.8 H52.2" stroke="#777" stroke-width="0.6"/><path d="M53.0,59.8 H57.4" stroke="#777" stroke-width="0.6"/><path d="M58.4,59.8 H60.0" stroke="#777" stroke-width="0.6"/><path d="M60.9,59.8 H62.5" stroke="#777" stroke-width="0.6"/><path d="M63.4,59.8 H65.2" stroke="#777" stroke-width="0.6"/><path d="M66.2,59.8 H68.5" stroke="#777" stroke-width="0.6"/><path d="M68.9,59.8 H69.0" stroke="#777" stroke-width="0.6"/><path d="M44.0,61.0 H46.3" stroke="#a9a9a9" stroke-width="0.6"/><path d="M46.9,61.0 H49.7" stroke="#a9a9a9" stroke-width="0.6"/><path d="M50.3,61.0 H51.9" stroke="#a9a9a9" stroke-width="0.6"/><path d="M52.6,61.0 H55.4" stroke="#a9a9a9" stroke-width="0.6"/><path d="M55.9,61.0 H60.4" stroke="#a9a9a9" stroke-width="0.6"/><path d="M61.3,61.0 H63.6" stroke="#a9a9a9" stroke-width="0.6"/><path d="M64.5,61.0 H68.8" stroke="#a9a9a9" stroke-width="0.6"/><path d="M69.2,61.0 H71.0" stroke="#a9a9a9" stroke-width="0.6"/><path d="M71.5,61.0 H76.2" stroke="#a9a9a9" stroke-width="0.6"/><path d="M77.0,61.0 H77.0" stroke="#a9a9a9" stroke-width="0.6"/><path d="M44.0,62.3 H46.5" stroke="#a9a9a9" stroke-width="0.6"/><path d="M46.9,62.3 H49.2" stroke="#a9a9a9" stroke-width="0.6"/><path d="M50.0,62.3 H51.9" stroke="#a9a9a9" stroke-width="0.6"/><path d="M52.7,62.3 H55.3" stroke="#a9a9a9" stroke-width="0.6"/><path d="M56.0,62.3 H58.3" stroke="#a9a9a9" stroke-width="0.6"/><path d="M59.3,62.3 H63.6" stroke="#a9a9a9" stroke-width="0.6"/><path d="M64.2,62.3 H67.7" stroke="#a9a9a9" stroke-width="0.6"/><path d="M68.6,62.3 H69.0" stroke="#a9a9a9" stroke-width="0.6"/><path d="M44.0,63.5 H46.0" stroke="#a9a9a9" stroke-width="0.6"/><path d="M46.7,63.5 H50.1" stroke="#a9a9a9" stroke-width="0.6"/><path d="M50.6,63.5 H55.5" stroke="#a9a9a9" stroke-width="0.6"/><path d="M56.0,63.5 H58.8" stroke="#a9a9a9" stroke-width="0.6"/><path d="M59.4,63.5 H63.9" stroke="#a9a9a9" stroke-width="0.6"/><path d="M64.4,63.5 H67.3" stroke="#a9a9a9" stroke-width="0.6"/><path d="M68.1,63.5 H70.4" stroke="#a9a9a9" stroke-width="0.6"/><path d="M70.9,63.5 H74.6" stroke="#a9a9a9" stroke-width="0.6"/><path d="M75.0,63.5 H77.9" stroke="#a9a9a9" stroke-width="0.6"/><path d="M78.4,63.5 H79.0" stroke="#a9a9a9" stroke-width="0.6"/><path d="M44.0,64.8 H46.9" stroke="#a9a9a9" stroke-width="0.6"/><path d="M47.8,64.8 H49.9" stroke="#a9a9a9" stroke-width="0.6"/><path d="M50.3,64.8 H52.7" stroke="#a9a9a9" stroke-width="0.6"/><path d="M53.7,64.8 H56.5" stroke="#a9a9a9" stroke-width="0.6"/><path d="M57.1,64.8 H59.2" stroke="#a9a9a9" stroke-width="0.6"/><path d="M60.1,64.8 H62.4" stroke="#a9a9a9" stroke-width="0.6"/><path d="M62.9,64.8 H66.9" stroke="#a9a9a9" stroke-width="0.6"/><path d="M67.8,64.8 H70.3" stroke="#a9a9a9" stroke-width="0.6"/><path d="M71.1,64.8 H75.0" stroke="#a9a9a9" stroke-width="0.6"/><path d="M75.6,64.8 H80.0" stroke="#a9a9a9" stroke-width="0.6"/><path d="M44.0,68.6 H46.2" stroke="#a9a9a9" stroke-width="0.6"/><path d="M46.7,68.6 H48.7" stroke="#a9a9a9" stroke-width="0.6"/><path d="M49.3,68.6 H53.0" stroke="#a9a9a9" stroke-width="0.6"/><path d="M53.8,68.6 H57.8" stroke="#a9a9a9" stroke-width="0.6"/><path d="M58.3,68.6 H61.7" stroke="#a9a9a9" stroke-width="0.6"/><path d="M62.2,68.6 H65.6" stroke="#a9a9a9" stroke-width="0.6"/><path d="M66.5,68.6 H69.0" stroke="#a9a9a9" stroke-width="0.6"/><path d="M44.0,69.9 H45.9" stroke="#777" stroke-width="0.6"/><path d="M46.5,69.9 H48.7" stroke="#777" stroke-width="0.6"/><path d="M49.3,69.9 H54.0" stroke="#777" stroke-width="0.6"/><path d="M54.4,69.9 H57.1" stroke="#777" stroke-width="0.6"/><path d="M58.1,69.9 H62.8" stroke="#777" stroke-width="0.6"/><path d="M63.6,69.9 H66.5" stroke="#777" stroke-width="0.6"/><path d="M67.2,69.9 H69.0" stroke="#777" stroke-width="0.6"/><path d="M44.0,71.1 H47.3" stroke="#a9a9a9" stroke-width="0.6"/><path d="M48.3,71.1 H51.3" stroke="#a9a9a9" stroke-width="0.6"/><path d="M52.0,71.1 H55.3" stroke="#a9a9a9" stroke-width="0.6"/><path d="M55.8,71.1 H59.8" stroke="#a9a9a9" stroke-width="0.6"/><path d="M60.3,71.1 H64.0" stroke="#a9a9a9" stroke-width="0.6"/><path d="M64.9,71.1 H69.0" stroke="#a9a9a9" stroke-width="0.6"/><path d="M44.0,72.4 H47.2" stroke="#777" stroke-width="0.6"/><path d="M47.9,72.4 H50.4" stroke="#777" stroke-width="0.6"/><path d="M50.9,72.4 H53.2" stroke="#777" stroke-width="0.6"/><path d="M53.9,72.4 H56.0" stroke="#777" stroke-width="0.6"/><path d="M56.4,72.4 H61.2" stroke="#777" stroke-width="0.6"/><path d="M61.9,72.4 H65.6" stroke="#777" stroke-width="0.6"/><path d="M66.5,72.4 H69.0" stroke="#777" stroke-width="0.6"/><path d="M44.0,73.6 H47.9" stroke="#a9a9a9" stroke-width="0.6"/><path d="M48.4,73.6 H49.9" stroke="#a9a9a9" stroke-width="0.6"/><path d="M50.6,73.6 H53.3" stroke="#a9a9a9" stroke-width="0.6"/><path d="M54.0,73.6 H57.3" stroke="#a9a9a9" stroke-width="0.6"/><path d="M58.3,73.6 H60.3" stroke="#a9a9a9" stroke-width="0.6"/><path d="M61.2,73.6 H66.2" stroke="#a9a9a9" stroke-width="0.6"/><path d="M67.0,73.6 H69.0" stroke="#a9a9a9" stroke-width="0.6"/><path d="M44.0,74.9 H46.2" stroke="#a9a9a9" stroke-width="0.6"/><path d="M46.9,74.9 H50.4" stroke="#a9a9a9" stroke-width="0.6"/><path d="M51.3,74.9 H53.1" stroke="#a9a9a9" stroke-width="0.6"/><path d="M53.7,74.9 H57.4" stroke="#a9a9a9" stroke-width="0.6"/><path d="M58.1,74.9 H60.2" stroke="#a9a9a9" stroke-width="0.6"/><path d="M60.6,74.9 H63.9" stroke="#a9a9a9" stroke-width="0.6"/><path d="M64.9,74.9 H66.6" stroke="#a9a9a9" stroke-width="0.6"/><path d="M67.3,74.9 H72.2" stroke="#a9a9a9" stroke-width="0.6"/><path d="M72.7,74.9 H75.7" stroke="#a9a9a9" stroke-width="0.6"/><path d="M76.7,74.9 H77.0" stroke="#a9a9a9" stroke-width="0.6"/><path d="M45.0,77.5 H79.5" stroke="#555" stroke-width="0.6"/><path d="M45.0,79.5 H79.5" stroke="#555" stroke-width="0.6"/><path d="M45.0,81.5 H79.5" stroke="#555" stroke-width="0.6"/><path d="M45.0,83.5 H79.5" stroke="#555" stroke-width="0.6"/><path d="M45.0,85.5 H79.5" stroke="#555" stroke-width="0.6"/><path d="M45.0,88.0 H79.5" stroke="#555" stroke-width="0.6"/><path d="M45.0,90.5 H79.5" stroke="#555" stroke-width="0.6"/><rect x="61.0" y="77.5" width="1.3" height="13.0" fill="#444"/><path d="M5.0,96.4 H80.6" stroke="#333" stroke-width="1"/><path d="M5.0,97.8 H9.8" stroke="#aaa" stroke-width="0.5"/><path d="M10.7,97.8 H15.3" stroke="#aaa" stroke-width="0.5"/><path d="M16.2,97.8 H18.6" stroke="#aaa" stroke-width="0.5"/><path d="M19.1,97.8 H22.0" stroke="#aaa" stroke-width="0.5"/><path d="M38.0,97.8 H40.3" stroke="#aaa" stroke-width="0.5"/><path d="M41.2,97.8 H43.2" stroke="#aaa" stroke-width="0.5"/><path d="M43.9,97.8 H46.0" stroke="#aaa" stroke-width="0.5"/><path d="M65.0,97.8 H68.7" stroke="#aaa" stroke-width="0.5"/><path d="M69.2,97.8 H73.6" stroke="#aaa" stroke-width="0.5"/><path d="M74.2,97.8 H77.8" stroke="#aaa" stroke-width="0.5"/><path d="M78.7,97.8 H80.6" stroke="#aaa" stroke-width="0.5"/></svg></div>
<div class="pn" style="top:525.5px">3</div>
<div class="thumb" style="top:549px;"><svg style="position:absolute;left:-1px;top:-1px" width="85.5" height="101" viewBox="0 0 85.5 101"></svg></div>
</div>
<div style="position:absolute;left:0;top:0;width:1600px;height:748px;overflow:hidden">
<div class="r" style="left:327.50px;top:283.00px;width:1092.50px;height:4.00px;background:#000;"></div>
<div class="r" style="left:509.00px;top:287.00px;width:2.00px;height:70.00px;background:#000;"></div>
<div class="r" style="left:327.50px;top:356.50px;width:1092.50px;height:2.00px;background:#000;"></div>
<div class="t" style="left:350.75px;top:305.38px;font-size:20.23px;font-weight:normal;font-style:normal;color:#000;">Form</div>
<div class="t" style="left:403.00px;top:295.10px;font-size:32.37px;font-weight:bold;font-style:normal;color:#000;">433-F</div>
<div class="t" style="left:19.00px;width:800px;text-align:center;top:326.59px;font-size:18.2px;font-weight:normal;color:#000;">(February 2019)</div>
<div class="t" style="left:565.00px;width:800px;text-align:center;top:294.30px;font-size:16.18px;font-weight:normal;color:#000;">Department of the Treasury - Internal Revenue Service</div>
<div class="t" style="left:565.00px;width:800px;text-align:center;top:316.78px;font-size:36.41px;font-weight:bold;color:#000;">Collection Information Statement</div>
<div class="r" style="left:808.00px;top:358.50px;width:1.00px;height:181.50px;background:#444;"></div>
<div class="t" style="left:328.50px;top:364.80px;font-size:16.18px;font-weight:normal;font-style:normal;color:#000;">Name(s) and Address</div>
<div class="f" style="left:328.00px;top:385.00px;width:473.00px;height:60.20px;"></div>
<div class="t" style="left:816.25px;top:361.55px;font-size:16.18px;font-weight:normal;font-style:normal;color:#000;letter-spacing:0.035px">Your Social Security Number or Individual Taxpayer Identification Number</div>
<div class="f" style="left:816.00px;top:379.00px;width:603.50px;height:21.80px;"></div>
<div class="r" style="left:808.00px;top:400.80px;width:612.00px;height:1.00px;background:#505050;"></div>
<div class="t" style="left:816.25px;top:405.30px;font-size:16.18px;font-weight:normal;font-style:normal;color:#000;letter-spacing:0.034px">Your Spouse&#8217;s Social Security Number or Individual Taxpayer Identification Number</div>
<div class="f" style="left:816.00px;top:423.50px;width:603.50px;height:21.00px;"></div>
<div class="r" style="left:327.50px;top:445.00px;width:1092.50px;height:1.00px;background:#7d8696;"></div>
<div class="r" style="left:327.75px;top:452.5px;width:21.5px;height:21px;background:#d5e5fc;border:1px solid #4a4a4a"></div>
<div class="t" style="left:365.00px;top:450.70px;font-size:16.18px;font-weight:normal;font-style:normal;color:#000;">If address provided above is different than last return filed,</div>
<div class="t" style="left:365.00px;top:470.05px;font-size:16.18px;font-weight:normal;font-style:normal;color:#000;">please check here</div>
<div class="r" style="left:327.50px;top:495.40px;width:480.50px;height:1.00px;background:#5f5f5f;"></div>
<div class="t" style="left:328.50px;top:499.40px;font-size:16.18px;font-weight:normal;font-style:normal;color:#000;">County of Residence</div>
<div class="f" style="left:328.00px;top:518.00px;width:473.00px;height:21.60px;"></div>
<div class="t" style="left:816.25px;top:450.70px;font-size:16.18px;font-weight:normal;font-style:normal;color:#000;">Your telephone numbers</div>
<div class="r" style="left:1113.00px;top:445.00px;width:1.50px;height:95.00px;background:#222;"></div>
<div class="t" style="left:1121.90px;top:450.20px;font-size:16.18px;font-weight:normal;font-style:normal;color:#000;">Spouse&#8217;s telephone numbers</div>
<div class="t" style="left:816.25px;top:474.40px;font-size:16.18px;font-weight:normal;font-style:normal;color:#000;">Home:</div>
<div class="t" style="left:1121.90px;top:474.40px;font-size:16.18px;font-weight:normal;font-style:normal;color:#000;">Home:</div>
<div class="t" style="left:816.25px;top:496.30px;font-size:16.18px;font-weight:normal;font-style:normal;color:#000;">Work:</div>
<div class="t" style="left:1121.90px;top:496.30px;font-size:16.18px;font-weight:normal;font-style:normal;color:#000;">Work:</div>
<div class="t" style="left:816.25px;top:518.55px;font-size:16.18px;font-weight:normal;font-style:normal;color:#000;">Cell:</div>
<div class="t" style="left:1121.90px;top:518.55px;font-size:16.18px;font-weight:normal;font-style:normal;color:#000;">Cell:</div>
<div class="f" style="left:873.50px;top:474.40px;width:233.10px;height:21.40px;border-bottom-color:#7fa4e6"></div>
<div class="f" style="left:1180.00px;top:474.40px;width:239.50px;height:21.40px;border-bottom-color:#7fa4e6"></div>
<div class="f" style="left:873.50px;top:495.80px;width:233.10px;height:21.80px;border-bottom-color:#7fa4e6"></div>
<div class="f" style="left:1180.00px;top:495.80px;width:239.50px;height:21.80px;border-bottom-color:#7fa4e6"></div>
<div class="f" style="left:873.50px;top:517.60px;width:233.10px;height:22.00px;border-bottom-color:#7fa4e6"></div>
<div class="f" style="left:1180.00px;top:517.60px;width:239.50px;height:22.00px;border-bottom-color:#7fa4e6"></div>
<div class="r" style="left:327.50px;top:539.40px;width:1092.50px;height:1.50px;background:#222;"></div>
<div class="t" style="left:328.50px;top:546.05px;font-size:16.18px;font-weight:normal;font-style:normal;color:#000;letter-spacing:-0.24px">Enter the number of people in the household who can be claimed on this year&#8217;s tax return including you and your spouse.</div>
<div class="t" style="left:1176.50px;top:545.80px;font-size:16.18px;font-weight:normal;font-style:normal;color:#000;letter-spacing:-0.45px">Under 65</div>
<div class="f" style="left:1247.40px;top:540.20px;width:36.60px;height:24.30px;border-bottom:1.2px solid #555"></div>
<div class="t" style="left:1288.60px;top:545.80px;font-size:16.18px;font-weight:normal;font-style:normal;color:#000;letter-spacing:-0.4px">65 and Over</div>
<div class="f" style="left:1382.75px;top:540.20px;width:36.75px;height:24.30px;border-bottom:1.2px solid #555"></div>
<div class="r" style="left:327.50px;top:568.00px;width:1092.50px;height:1.00px;background:#505050;"></div>
<div class="t" style="left:328.50px;top:575.05px;font-size:16.18px;font-weight:normal;font-style:normal;color:#000;">If you or your spouse are self employed or have self employment income, provide the following information:</div>
<div class="r" style="left:327.50px;top:597.30px;width:1092.50px;height:1.00px;background:#505050;"></div>
<div class="r" style="left:655.00px;top:597.50px;width:1.50px;height:51.50px;background:#111;"></div>
<div class="r" style="left:814.50px;top:597.50px;width:1.50px;height:51.50px;background:#111;"></div>
<div class="r" style="left:1113.00px;top:597.50px;width:1.50px;height:51.50px;background:#111;"></div>
<div class="t" style="left:88.00px;width:800px;text-align:center;top:603.20px;font-size:16.18px;font-weight:normal;color:#000;">Name of Business</div>
<div class="t" style="left:335.30px;width:800px;text-align:center;top:603.40px;font-size:16.18px;font-weight:normal;color:#000;">Business EIN</div>
<div class="t" style="left:564.30px;width:800px;text-align:center;top:603.40px;font-size:16.18px;font-weight:normal;color:#000;">Type of Business</div>
<div class="t" style="left:1121.6px;top:603.20px;font-size:16.18px">Number of Employees <span style="font-style:italic;font-size:14.16px">(not counting owner)</span></div>
<div class="f" style="left:328.00px;top:624.20px;width:320.00px;height:24.20px;"></div>
<div class="f" style="left:663.00px;top:624.00px;width:145.80px;height:24.40px;"></div>
<div class="f" style="left:822.30px;top:624.00px;width:284.40px;height:24.40px;"></div>
<div class="f" style="left:1121.00px;top:624.00px;width:298.30px;height:24.40px;"></div>
<div class="r" style="left:327.50px;top:647.80px;width:1092.50px;height:1.50px;background:#111;"></div>
<div class="r" style="left:327.50px;top:649.30px;width:1092.50px;height:27.30px;background:#dfdfdf;"></div>
<div class="t" style="left:328.50px;top:653.55px;font-size:16.18px;font-weight:bold;font-style:normal;color:#000;">A. ACCOUNTS / LINES OF CREDIT</div>
<div class="r" style="left:327.50px;top:676.60px;width:1092.50px;height:2.20px;background:#000;"></div>
<div class="r" style="left:327.50px;top:678.80px;width:1092.50px;height:49.40px;background:#dfdfdf;"></div>
<div class="t" style="left:329.00px;top:684.05px;font-size:16.18px;font-weight:normal;font-style:normal;color:#000;"><b>PERSONAL BANK ACCOUNTS</b> Include checking, online, mobile (e.g., PayPal), savings accounts, money market accounts. (Use additional sheets if</div>
<div class="t" style="left:329.00px;top:704.10px;font-size:16.18px;font-weight:normal;font-style:normal;color:#000;">necessary.)</div>
<div class="r" style="left:327.50px;top:728.20px;width:1092.50px;height:2.00px;background:#000;"></div>
<div class="r" style="left:866.00px;top:730.00px;width:1.20px;height:30.00px;background:#222;"></div>
<div class="r" style="left:1026.20px;top:730.00px;width:1.20px;height:30.00px;background:#222;"></div>
<div class="r" style="left:1128.10px;top:730.00px;width:1.20px;height:30.00px;background:#222;"></div>
<div class="r" style="left:1273.10px;top:730.00px;width:1.20px;height:30.00px;background:#222;"></div>
<div class="t" style="left:193.30px;width:800px;text-align:center;top:739.50px;font-size:16.18px;font-weight:normal;color:#000;">Name and Address of Institution</div>
<div class="t" style="left:546.30px;width:800px;text-align:center;top:739.50px;font-size:16.18px;font-weight:normal;color:#000;">Account Number</div>
<div class="t" style="left:677.20px;width:800px;text-align:center;top:732.70px;font-size:16.18px;font-weight:normal;color:#000;">Type of</div>
<div class="t" style="left:800.60px;width:800px;text-align:center;top:732.70px;font-size:16.18px;font-weight:normal;color:#000;">Current</div>
<div class="t" style="left:946.60px;width:800px;text-align:center;top:732.70px;font-size:16.18px;font-weight:normal;color:#000;">Check if</div>
</div>
</body></html>
